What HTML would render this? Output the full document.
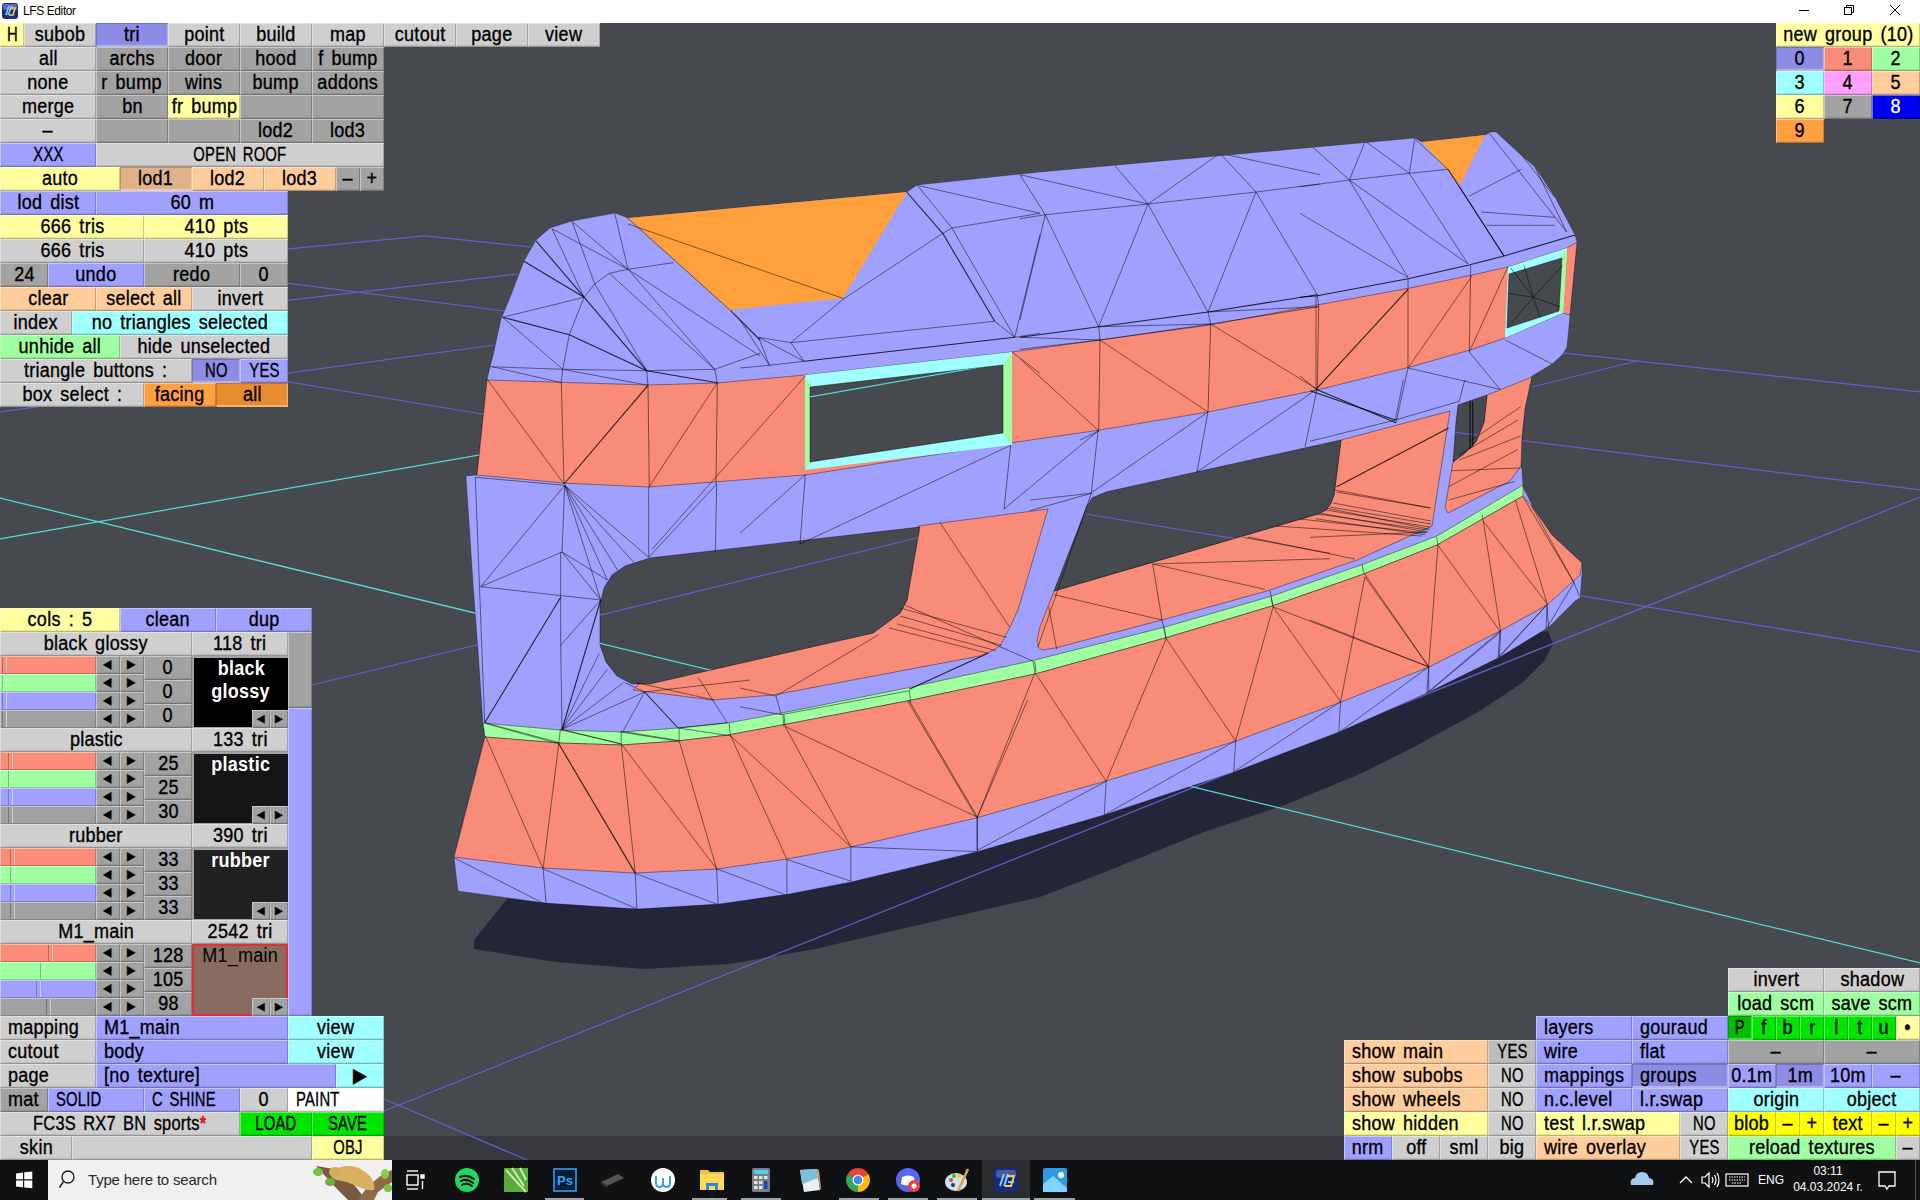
<!DOCTYPE html>
<html><head><meta charset="utf-8"><style>
*{margin:0;padding:0;box-sizing:border-box}
html,body{width:1920px;height:1200px;overflow:hidden;background:#46494e;font-family:"Liberation Sans",sans-serif}
.b{position:absolute;font-size:20px;line-height:24px;white-space:nowrap;overflow:hidden;
 box-shadow:inset 1px 1px 0 rgba(255,255,255,.4),inset -1px -1px 0 rgba(0,0,0,.2),inset 0 -2px 1px rgba(0,0,0,.1)}
.b span{display:inline-block;transform:scaleX(.9);transform-origin:50% 50%;word-spacing:3px;letter-spacing:.3px;position:relative;top:-1px;-webkit-text-stroke:0.35px currentColor}
.b.p{box-shadow:inset 1px 1px 0 rgba(0,0,0,.18),inset -1px -2px 1px rgba(255,255,255,.35)}
.b.u span{transform:scaleX(.74)}
.b.l span{transform-origin:0 50%}
.sl{position:absolute;box-shadow:inset 1px 1px 0 rgba(255,255,255,.4),inset -1px -1px 0 rgba(0,0,0,.2)}
.sl i{position:absolute;top:1px;width:5px;height:16px;border-left:1px solid rgba(0,0,0,.25);border-right:1px solid rgba(255,255,255,.5)}
.pv{position:absolute;font-size:20px;line-height:24px;text-align:center}
.pv span{display:inline-block;transform:scaleX(.9);word-spacing:3px;letter-spacing:.3px;position:relative;top:-1px}
#title{position:absolute;left:0;top:0;width:1920px;height:23px;background:#fff}
#status{position:absolute;left:0;top:1136px;width:1920px;height:24px;background:#36383d}
#tb{position:absolute;left:0;top:1160px;width:1920px;height:40px;background:#101113}
</style></head><body>
<div id="title"><svg style="position:absolute;left:0;top:0" width="1920" height="23"><rect x="2" y="3" width="16" height="16" rx="3" fill="#1a2f80"/><rect x="3" y="4" width="14" height="6" rx="2" fill="#5a70c0"/><path d="M6,15 L9,6 M8,15 L12,6" stroke="#7fd0ff" stroke-width="1.6"/><path d="M10,8 L15,8 L13,15 L9,15" stroke="#f0d040" stroke-width="1.6" fill="none"/><line x1="1799" y1="10.5" x2="1809" y2="10.5" stroke="#000" stroke-width="1"/><rect x="1844.5" y="7.5" width="7" height="7" fill="none" stroke="#000" stroke-width="1"/><path d="M1846.5,7.5 V5.5 H1853.5 V12.5 H1851.5" fill="none" stroke="#000" stroke-width="1"/><path d="M1890,5 L1900,15 M1900,5 L1890,15" stroke="#000" stroke-width="1"/></svg><div style="position:absolute;left:23px;top:3px;font-size:12px;line-height:16px;color:#000;letter-spacing:-0.4px">LFS Editor</div></div>
<div id="status"></div>
<svg width="1920" height="1137" viewBox="0 0 1920 1137" style="position:absolute;left:0;top:23px">
<g transform="translate(0,-23)">
<polygon points="507,899 474,940 474,949 556,962 644,969 729,964 815,949 927,923 1040,897 1100,874 1204,832 1282,806 1360,774 1412,748 1478,712 1522,683 1545,660 1553,644 1548,631 1400,650 800,850" fill="#232638" />
<polyline points="0,276 425,236 531,247" fill="none" stroke="#6660d0" stroke-width="1.25"/>
<polyline points="0,246 504,311" fill="none" stroke="#6660d0" stroke-width="1.25"/>
<polyline points="0,333 518,274" fill="none" stroke="#6660d0" stroke-width="1.25"/>
<polyline points="0,412 495,345" fill="none" stroke="#6660d0" stroke-width="1.25"/>
<polyline points="0,334 482,414 560,427" fill="none" stroke="#6660d0" stroke-width="1.25"/>
<polyline points="312,685 917,538 1100,493" fill="none" stroke="#6660d0" stroke-width="1.25"/>
<polyline points="1086,514 1920,652" fill="none" stroke="#6660d0" stroke-width="1.25"/>
<polyline points="1300,413 1920,490" fill="none" stroke="#6660d0" stroke-width="1.25"/>
<polyline points="1532,387 1637,361" fill="none" stroke="#6660d0" stroke-width="1.25"/>
<polyline points="1500,346 1920,392" fill="none" stroke="#6660d0" stroke-width="1.25"/>
<polyline points="384,1111 1920,497" fill="none" stroke="#6660d0" stroke-width="1.25"/>
<polyline points="384,1099 527,1160" fill="none" stroke="#6660d0" stroke-width="1.25"/>
<polyline points="0,539 1100,346" fill="none" stroke="#58d8d8" stroke-width="1.25"/>
<polyline points="0,498 1920,963" fill="none" stroke="#58d8d8" stroke-width="1.25"/>
<polygon points="458,891 454,857 485,736 483,723 478,650 473,583 466,476 477,475 487,380 490,367 493,356 501,319 511,295 524,261 536,240 550,228 572,221 615,213 628,218 907,192 917,185 1040,172 1415,138 1422,142 1485,135 1491,132 1496,132 1521,155 1535,167 1555,197 1575,235 1577,242 1570,315 1567,347 1562,355 1552,364 1532,376 1530,385 1525,409 1522,437 1521,466 1522,470 1523,487 1534,509 1552,535 1582,563 1582,574 1580,598 1575,601 1549,627 1500,657 1427,693 1339,732 1234,772 1104,815 976,852 851,882 789,894 719,904 637,909 545,903" fill="#a0a0ff" stroke="#000" stroke-opacity="0.3" stroke-width="0.8"/>
<polygon points="487,380 648,385 717,383 805,375 1012,352 1100,340 1210,325 1317,305 1410,288 1472,275 1508,267 1567,248 1577,242 1570,315 1563,313 1505,338 1470,350 1410,367 1317,390 1208,412 1100,430 1010,443 805,475 648,487 563,483 477,475" fill="#f88c78" stroke="#000" stroke-opacity="0.45" stroke-width="0.9"/>
<polygon points="805,375 1012,352 1012,445 805,470" fill="#a0ffff" />
<polygon points="1508,267 1567,248 1563,313 1505,338" fill="#a0ffff" />
<polygon points="805,375 810,387 810,462 805,470" fill="#a0ffa0" />
<polygon points="1003,365 1012,352 1012,445 1003,433" fill="#a0ffa0" />
<polygon points="1559,260 1567,248 1563,313 1557,310" fill="#a0ffa0" />
<polygon points="628,218 907,192 843,298 730,310" fill="#ffa03c" />
<polygon points="1422,142 1485,135 1460,185" fill="#ffa03c" />
<polygon points="918,526 1048,509 1018,610 1010,627 1000,646 990,652 980,656 773,695 713,700 633,690 640,683 873,633 900,613 907,600" fill="#f88c78" stroke="#000" stroke-opacity="0.45" stroke-width="0.9"/>
<polygon points="1341,440 1450,411 1432,526 1357,560 1267,591 1162,620 1055,648 1042,650 1038,647 1037,640 1040,627 1054,591 1318,514 1326,510 1331,503 1334,495" fill="#f88c78" stroke="#000" stroke-opacity="0.45" stroke-width="0.9"/>
<polygon points="1487,395 1532,377 1530,385 1525,409 1522,437 1521,466 1510,481 1448,513 1445,508 1453,462 1465,453 1476,442 1484,422" fill="#f88c78" stroke="#000" stroke-opacity="0.45" stroke-width="0.9"/>
<polygon points="483,723 560,730 622,732 678,728 728,723 782,713 907,688 1035,660 1165,627 1272,596 1361,565 1437,536 1523,485 1523,496 1437,545 1361,575 1272,606 1165,638 1035,674 907,701 782,725 728,735 678,741 622,745 560,743 485,737" fill="#a0ffa0" stroke="#000" stroke-opacity="0.45" stroke-width="0.9"/>
<polygon points="485,737 560,743 622,745 678,741 728,735 782,725 907,701 1035,674 1165,638 1272,606 1361,575 1437,545 1523,496 1534,509 1552,535 1582,563 1580,575 1547,605 1500,631 1429,667 1341,702 1236,741 1106,781 976,818 851,847 787,859 717,869 635,873 543,868 454,857" fill="#f88c78" stroke="#000" stroke-opacity="0.45" stroke-width="0.9"/>
<defs><clipPath id="hc"><polygon points="650,558 920,527 907,600 900,613 873,633 650,684 632,684 617,676 606,662 600,645 600,605 604,588 612,575 625,566" fill="#000" /><polygon points="1106,492 1341,440 1334,495 1331,503 1326,510 1318,514 1054,591 1087,506 1092,498" fill="#000" /><polygon points="1458,405 1487,395 1484,422 1476,442 1465,453 1453,462 1456,422" fill="#000" /><polygon points="810,387 1003,365 1003,433 810,462" fill="#000" /><polygon points="1509,274 1562,258 1559,311 1507,328" fill="#000" /></clipPath></defs>
<polygon points="650,558 920,527 907,600 900,613 873,633 650,684 632,684 617,676 606,662 600,645 600,605 604,588 612,575 625,566" fill="#46494e" stroke="#000" stroke-opacity="0.45" stroke-width="0.9"/>
<polygon points="1106,492 1341,440 1334,495 1331,503 1326,510 1318,514 1054,591 1087,506 1092,498" fill="#46494e" stroke="#000" stroke-opacity="0.45" stroke-width="0.9"/>
<polygon points="1458,405 1487,395 1484,422 1476,442 1465,453 1453,462 1456,422" fill="#46494e" stroke="#000" stroke-opacity="0.45" stroke-width="0.9"/>
<polygon points="810,387 1003,365 1003,433 810,462" fill="#46494e" stroke="#000" stroke-opacity="0.45" stroke-width="0.9"/>
<polygon points="1509,274 1562,258 1559,311 1507,328" fill="#46494e" stroke="#000" stroke-opacity="0.45" stroke-width="0.9"/>
<g clip-path="url(#hc)">
<polyline points="0,276 425,236 531,247" fill="none" stroke="#6660d0" stroke-width="1.25"/>
<polyline points="0,246 504,311" fill="none" stroke="#6660d0" stroke-width="1.25"/>
<polyline points="0,333 518,274" fill="none" stroke="#6660d0" stroke-width="1.25"/>
<polyline points="0,412 495,345" fill="none" stroke="#6660d0" stroke-width="1.25"/>
<polyline points="0,334 482,414 560,427" fill="none" stroke="#6660d0" stroke-width="1.25"/>
<polyline points="312,685 917,538 1100,493" fill="none" stroke="#6660d0" stroke-width="1.25"/>
<polyline points="1086,514 1920,652" fill="none" stroke="#6660d0" stroke-width="1.25"/>
<polyline points="1300,413 1920,490" fill="none" stroke="#6660d0" stroke-width="1.25"/>
<polyline points="1532,387 1637,361" fill="none" stroke="#6660d0" stroke-width="1.25"/>
<polyline points="1500,346 1920,392" fill="none" stroke="#6660d0" stroke-width="1.25"/>
<polyline points="384,1111 1920,497" fill="none" stroke="#6660d0" stroke-width="1.25"/>
<polyline points="384,1099 527,1160" fill="none" stroke="#6660d0" stroke-width="1.25"/>
<polyline points="0,539 1100,346" fill="none" stroke="#58d8d8" stroke-width="1.25"/>
<polyline points="0,498 1920,963" fill="none" stroke="#58d8d8" stroke-width="1.25"/>
</g>
<defs><clipPath id="sc"><polygon points="458,891 454,857 485,736 483,723 478,650 473,583 466,476 477,475 487,380 490,367 493,356 501,319 511,295 524,261 536,240 550,228 572,221 615,213 628,218 907,192 917,185 1040,172 1415,138 1422,142 1485,135 1491,132 1496,132 1521,155 1535,167 1555,197 1575,235 1577,242 1570,315 1567,347 1562,355 1552,364 1532,376 1530,385 1525,409 1522,437 1521,466 1522,470 1523,487 1534,509 1552,535 1582,563 1582,574 1580,598 1575,601 1549,627 1500,657 1427,693 1339,732 1234,772 1104,815 976,852 851,882 789,894 719,904 637,909 545,903" fill="#000" /></clipPath></defs>
<g clip-path="url(#sc)"><polyline points="536.0,240.8 646.7,370.7" stroke="#000" stroke-opacity="0.8" stroke-width="1.1" fill="none"/><polyline points="524.0,261.3 584.0,297.3" stroke="#000" stroke-opacity="0.8" stroke-width="1.1" fill="none"/><polyline points="552.0,228.8 584.0,297.3" stroke="#000" stroke-opacity="0.55" stroke-width="0.9" fill="none"/><polyline points="584.0,297.3 502.7,317.3" stroke="#000" stroke-opacity="0.55" stroke-width="0.9" fill="none"/><polyline points="502.7,317.3 569.3,334.7" stroke="#000" stroke-opacity="0.8" stroke-width="1.1" fill="none"/><polyline points="569.3,334.7 646.7,370.7" stroke="#000" stroke-opacity="0.8" stroke-width="1.1" fill="none"/><polyline points="502.7,317.3 562.7,369.3" stroke="#000" stroke-opacity="0.55" stroke-width="0.9" fill="none"/><polyline points="584.0,297.3 569.3,334.7" stroke="#000" stroke-opacity="0.55" stroke-width="0.9" fill="none"/><polyline points="569.3,334.7 562.7,369.3" stroke="#000" stroke-opacity="0.55" stroke-width="0.9" fill="none"/><polyline points="489.3,366.7 562.7,369.3" stroke="#000" stroke-opacity="0.55" stroke-width="0.9" fill="none"/><polyline points="562.7,369.3 646.7,370.7" stroke="#000" stroke-opacity="0.55" stroke-width="0.9" fill="none"/><polyline points="646.7,370.7 714.7,369.3" stroke="#000" stroke-opacity="0.55" stroke-width="0.9" fill="none"/><polyline points="492.0,366.7 561.3,382.7" stroke="#000" stroke-opacity="0.55" stroke-width="0.9" fill="none"/><polyline points="562.7,369.3 648.0,385.3" stroke="#000" stroke-opacity="0.55" stroke-width="0.9" fill="none"/><polyline points="646.7,370.7 717.3,382.7" stroke="#000" stroke-opacity="0.8" stroke-width="1.1" fill="none"/><polyline points="714.7,369.3 760.0,353.3" stroke="#000" stroke-opacity="0.55" stroke-width="0.9" fill="none"/><polyline points="572.0,221.3 594.7,284.0" stroke="#000" stroke-opacity="0.55" stroke-width="0.9" fill="none"/><polyline points="552.0,228.8 628.0,269.3" stroke="#000" stroke-opacity="0.55" stroke-width="0.9" fill="none"/><polyline points="572.0,221.3 628.0,269.3" stroke="#000" stroke-opacity="0.55" stroke-width="0.9" fill="none"/><polyline points="614.7,213.3 628.0,269.3" stroke="#000" stroke-opacity="0.55" stroke-width="0.9" fill="none"/><polyline points="594.7,284.0 609.3,273.3" stroke="#000" stroke-opacity="0.55" stroke-width="0.9" fill="none"/><polyline points="609.3,273.3 628.0,269.3" stroke="#000" stroke-opacity="0.55" stroke-width="0.9" fill="none"/><polyline points="628.0,269.3 673.3,262.7" stroke="#000" stroke-opacity="0.55" stroke-width="0.9" fill="none"/><polyline points="594.7,284.0 584.0,297.3" stroke="#000" stroke-opacity="0.55" stroke-width="0.9" fill="none"/><polyline points="594.7,284.0 646.7,370.7" stroke="#000" stroke-opacity="0.55" stroke-width="0.9" fill="none"/><polyline points="609.3,273.3 714.7,369.3" stroke="#000" stroke-opacity="0.55" stroke-width="0.9" fill="none"/><polyline points="628.0,269.3 714.7,369.3" stroke="#000" stroke-opacity="0.55" stroke-width="0.9" fill="none"/><polyline points="628.0,269.3 760.0,356.0" stroke="#000" stroke-opacity="0.55" stroke-width="0.9" fill="none"/><polyline points="730.7,310.7 760.0,340.0" stroke="#000" stroke-opacity="0.8" stroke-width="1.1" fill="none"/><polyline points="486.7,378.7 564.0,484.0" stroke="#000" stroke-opacity="0.55" stroke-width="0.9" fill="none"/><polyline points="648.0,385.3 564.0,484.0" stroke="#000" stroke-opacity="0.8" stroke-width="1.1" fill="none"/><polyline points="561.3,382.7 564.0,484.0" stroke="#000" stroke-opacity="0.55" stroke-width="0.9" fill="none"/><polyline points="648.0,385.3 649.3,486.7" stroke="#000" stroke-opacity="0.55" stroke-width="0.9" fill="none"/><polyline points="717.3,382.7 716.0,484.0" stroke="#000" stroke-opacity="0.55" stroke-width="0.9" fill="none"/><polyline points="717.3,382.7 649.3,486.7" stroke="#000" stroke-opacity="0.55" stroke-width="0.9" fill="none"/><polyline points="626.7,217.3 730.7,310.7" stroke="#000" stroke-opacity="0.55" stroke-width="0.9" fill="none"/><polyline points="714.7,369.3 717.3,382.7" stroke="#000" stroke-opacity="0.55" stroke-width="0.9" fill="none"/><polyline points="646.7,370.7 648.0,385.3" stroke="#000" stroke-opacity="0.55" stroke-width="0.9" fill="none"/><polyline points="562.7,369.3 561.3,382.7" stroke="#000" stroke-opacity="0.55" stroke-width="0.9" fill="none"/><polyline points="628.0,224.0 844.0,298.7" stroke="#000" stroke-opacity="0.55" stroke-width="0.9" fill="none"/><polyline points="906.7,192.0 942.7,233.3" stroke="#000" stroke-opacity="0.8" stroke-width="1.1" fill="none"/><polyline points="942.7,233.3 994.7,321.3" stroke="#000" stroke-opacity="0.8" stroke-width="1.1" fill="none"/><polyline points="917.3,185.3 952.0,228.0" stroke="#000" stroke-opacity="0.55" stroke-width="0.9" fill="none"/><polyline points="952.0,228.0 1014.7,337.3" stroke="#000" stroke-opacity="0.55" stroke-width="0.9" fill="none"/><polyline points="942.7,233.3 952.0,228.0" stroke="#000" stroke-opacity="0.55" stroke-width="0.9" fill="none"/><polyline points="952.0,228.0 1040.0,213.3" stroke="#000" stroke-opacity="0.55" stroke-width="0.9" fill="none"/><polyline points="917.3,185.3 1040.0,213.3" stroke="#000" stroke-opacity="0.55" stroke-width="0.9" fill="none"/><polyline points="1014.7,337.3 1040.0,234.7" stroke="#000" stroke-opacity="0.55" stroke-width="0.9" fill="none"/><polyline points="942.7,233.3 844.0,298.7" stroke="#000" stroke-opacity="0.55" stroke-width="0.9" fill="none"/><polyline points="844.0,298.7 790.7,342.7" stroke="#000" stroke-opacity="0.55" stroke-width="0.9" fill="none"/><polyline points="790.7,342.7 758.7,337.3" stroke="#000" stroke-opacity="0.55" stroke-width="0.9" fill="none"/><polyline points="758.7,337.3 769.3,365.3" stroke="#000" stroke-opacity="0.55" stroke-width="0.9" fill="none"/><polyline points="790.7,342.7 804.0,361.3" stroke="#000" stroke-opacity="0.55" stroke-width="0.9" fill="none"/><polyline points="758.7,337.3 804.0,361.3" stroke="#000" stroke-opacity="0.55" stroke-width="0.9" fill="none"/><polyline points="790.7,342.7 994.7,321.3" stroke="#000" stroke-opacity="0.55" stroke-width="0.9" fill="none"/><polyline points="804.0,361.3 1014.7,337.3" stroke="#000" stroke-opacity="0.8" stroke-width="1.1" fill="none"/><polyline points="769.3,365.3 804.0,361.3" stroke="#000" stroke-opacity="0.55" stroke-width="0.9" fill="none"/><polyline points="740.0,320.0 769.3,365.3" stroke="#000" stroke-opacity="0.55" stroke-width="0.9" fill="none"/><polyline points="740.0,368.0 769.3,365.3" stroke="#000" stroke-opacity="0.55" stroke-width="0.9" fill="none"/><polyline points="1014.7,337.3 1040.0,333.3" stroke="#000" stroke-opacity="0.55" stroke-width="0.9" fill="none"/><polyline points="805.3,376.0 652.0,549.3" stroke="#000" stroke-opacity="0.55" stroke-width="0.9" fill="none"/><polyline points="1012.0,352.0 1040.0,373.3" stroke="#000" stroke-opacity="0.55" stroke-width="0.9" fill="none"/><polyline points="994.7,321.3 1014.7,337.3" stroke="#000" stroke-opacity="0.55" stroke-width="0.9" fill="none"/><polyline points="1020.0,174.7 1045.3,214.7" stroke="#000" stroke-opacity="0.55" stroke-width="0.9" fill="none"/><polyline points="1020.0,174.7 1148.0,204.0" stroke="#000" stroke-opacity="0.55" stroke-width="0.9" fill="none"/><polyline points="1113.3,164.0 1148.0,204.0" stroke="#000" stroke-opacity="0.55" stroke-width="0.9" fill="none"/><polyline points="1148.0,204.0 1220.0,153.3" stroke="#000" stroke-opacity="0.55" stroke-width="0.9" fill="none"/><polyline points="1220.0,153.3 1256.0,192.0" stroke="#000" stroke-opacity="0.55" stroke-width="0.9" fill="none"/><polyline points="1220.0,153.3 1320.0,174.7" stroke="#000" stroke-opacity="0.55" stroke-width="0.9" fill="none"/><polyline points="1020.0,218.7 1045.3,214.7" stroke="#000" stroke-opacity="0.55" stroke-width="0.9" fill="none"/><polyline points="1045.3,214.7 1148.0,204.0" stroke="#000" stroke-opacity="0.55" stroke-width="0.9" fill="none"/><polyline points="1148.0,204.0 1256.0,192.0" stroke="#000" stroke-opacity="0.55" stroke-width="0.9" fill="none"/><polyline points="1256.0,192.0 1320.0,184.0" stroke="#000" stroke-opacity="0.55" stroke-width="0.9" fill="none"/><polyline points="1045.3,214.7 1098.7,326.7" stroke="#000" stroke-opacity="0.55" stroke-width="0.9" fill="none"/><polyline points="1148.0,204.0 1098.7,326.7" stroke="#000" stroke-opacity="0.55" stroke-width="0.9" fill="none"/><polyline points="1148.0,204.0 1208.0,312.0" stroke="#000" stroke-opacity="0.55" stroke-width="0.9" fill="none"/><polyline points="1256.0,192.0 1208.0,312.0" stroke="#000" stroke-opacity="0.55" stroke-width="0.9" fill="none"/><polyline points="1256.0,192.0 1317.3,294.7" stroke="#000" stroke-opacity="0.55" stroke-width="0.9" fill="none"/><polyline points="1045.3,214.7 1020.0,320.0" stroke="#000" stroke-opacity="0.55" stroke-width="0.9" fill="none"/><polyline points="1020.0,337.3 1098.7,326.7" stroke="#000" stroke-opacity="0.8" stroke-width="1.1" fill="none"/><polyline points="1098.7,326.7 1208.0,312.0" stroke="#000" stroke-opacity="0.8" stroke-width="1.1" fill="none"/><polyline points="1208.0,312.0 1317.3,294.7" stroke="#000" stroke-opacity="0.8" stroke-width="1.1" fill="none"/><polyline points="1020.0,349.3 1100.0,340.0" stroke="#000" stroke-opacity="0.55" stroke-width="0.9" fill="none"/><polyline points="1100.0,340.0 1210.7,324.0" stroke="#000" stroke-opacity="0.55" stroke-width="0.9" fill="none"/><polyline points="1210.7,324.0 1318.7,306.7" stroke="#000" stroke-opacity="0.55" stroke-width="0.9" fill="none"/><polyline points="1098.7,326.7 1100.0,340.0" stroke="#000" stroke-opacity="0.55" stroke-width="0.9" fill="none"/><polyline points="1208.0,312.0 1210.7,324.0" stroke="#000" stroke-opacity="0.55" stroke-width="0.9" fill="none"/><polyline points="1317.3,294.7 1318.7,306.7" stroke="#000" stroke-opacity="0.55" stroke-width="0.9" fill="none"/><polyline points="1020.0,337.3 1100.0,340.0" stroke="#000" stroke-opacity="0.55" stroke-width="0.9" fill="none"/><polyline points="1098.7,326.7 1210.7,324.0" stroke="#000" stroke-opacity="0.55" stroke-width="0.9" fill="none"/><polyline points="1208.0,312.0 1318.7,306.7" stroke="#000" stroke-opacity="0.55" stroke-width="0.9" fill="none"/><polyline points="1100.0,340.0 1098.7,430.7" stroke="#000" stroke-opacity="0.55" stroke-width="0.9" fill="none"/><polyline points="1100.0,340.0 1208.0,412.0" stroke="#000" stroke-opacity="0.55" stroke-width="0.9" fill="none"/><polyline points="1210.7,324.0 1208.0,412.0" stroke="#000" stroke-opacity="0.55" stroke-width="0.9" fill="none"/><polyline points="1210.7,324.0 1317.3,389.3" stroke="#000" stroke-opacity="0.55" stroke-width="0.9" fill="none"/><polyline points="1020.0,358.7 1098.7,430.7" stroke="#000" stroke-opacity="0.55" stroke-width="0.9" fill="none"/><polyline points="1318.7,306.7 1317.3,389.3" stroke="#000" stroke-opacity="0.55" stroke-width="0.9" fill="none"/><polyline points="1310.7,145.3 1349.3,180.0" stroke="#000" stroke-opacity="0.55" stroke-width="0.9" fill="none"/><polyline points="1365.3,141.3 1349.3,180.0" stroke="#000" stroke-opacity="0.55" stroke-width="0.9" fill="none"/><polyline points="1365.3,141.3 1409.3,173.3" stroke="#000" stroke-opacity="0.55" stroke-width="0.9" fill="none"/><polyline points="1414.7,138.7 1409.3,173.3" stroke="#000" stroke-opacity="0.55" stroke-width="0.9" fill="none"/><polyline points="1414.7,138.7 1448.0,169.3" stroke="#000" stroke-opacity="0.55" stroke-width="0.9" fill="none"/><polyline points="1300.0,186.7 1349.3,180.0" stroke="#000" stroke-opacity="0.55" stroke-width="0.9" fill="none"/><polyline points="1349.3,180.0 1409.3,173.3" stroke="#000" stroke-opacity="0.55" stroke-width="0.9" fill="none"/><polyline points="1409.3,173.3 1448.0,169.3" stroke="#000" stroke-opacity="0.55" stroke-width="0.9" fill="none"/><polyline points="1300.0,213.3 1408.0,277.3" stroke="#000" stroke-opacity="0.55" stroke-width="0.9" fill="none"/><polyline points="1349.3,180.0 1408.0,277.3" stroke="#000" stroke-opacity="0.55" stroke-width="0.9" fill="none"/><polyline points="1409.3,173.3 1468.0,264.0" stroke="#000" stroke-opacity="0.55" stroke-width="0.9" fill="none"/><polyline points="1349.3,180.0 1468.0,264.0" stroke="#000" stroke-opacity="0.55" stroke-width="0.9" fill="none"/><polyline points="1448.0,169.3 1504.0,256.0" stroke="#000" stroke-opacity="0.8" stroke-width="1.1" fill="none"/><polyline points="1458.7,185.3 1504.0,256.0" stroke="#000" stroke-opacity="0.55" stroke-width="0.9" fill="none"/><polyline points="1469.3,196.0 1521.3,169.3" stroke="#000" stroke-opacity="0.55" stroke-width="0.9" fill="none"/><polyline points="1481.3,212.0 1554.7,217.3" stroke="#000" stroke-opacity="0.55" stroke-width="0.9" fill="none"/><polyline points="1486.7,225.3 1554.7,225.3" stroke="#000" stroke-opacity="0.55" stroke-width="0.9" fill="none"/><polyline points="1300.0,297.3 1316.0,296.0" stroke="#000" stroke-opacity="0.8" stroke-width="1.1" fill="none"/><polyline points="1316.0,296.0 1408.0,278.7" stroke="#000" stroke-opacity="0.8" stroke-width="1.1" fill="none"/><polyline points="1408.0,278.7 1468.0,265.3" stroke="#000" stroke-opacity="0.8" stroke-width="1.1" fill="none"/><polyline points="1468.0,265.3 1504.0,256.0" stroke="#000" stroke-opacity="0.8" stroke-width="1.1" fill="none"/><polyline points="1504.0,256.0 1576.0,234.7" stroke="#000" stroke-opacity="0.8" stroke-width="1.1" fill="none"/><polyline points="1316.0,296.0 1316.0,389.3" stroke="#000" stroke-opacity="0.55" stroke-width="0.9" fill="none"/><polyline points="1408.0,278.7 1408.0,368.0" stroke="#000" stroke-opacity="0.55" stroke-width="0.9" fill="none"/><polyline points="1470.7,265.3 1469.3,352.0" stroke="#000" stroke-opacity="0.55" stroke-width="0.9" fill="none"/><polyline points="1316.0,389.3 1408.0,289.3" stroke="#000" stroke-opacity="0.8" stroke-width="1.1" fill="none"/><polyline points="1408.0,368.0 1472.0,276.0" stroke="#000" stroke-opacity="0.55" stroke-width="0.9" fill="none"/><polyline points="1469.3,352.0 1508.0,266.7" stroke="#000" stroke-opacity="0.55" stroke-width="0.9" fill="none"/><polyline points="1300.0,376.0 1316.0,389.3" stroke="#000" stroke-opacity="0.55" stroke-width="0.9" fill="none"/><polyline points="1316.0,389.3 1396.0,422.7" stroke="#000" stroke-opacity="0.8" stroke-width="1.1" fill="none"/><polyline points="1408.0,368.0 1396.0,422.7" stroke="#000" stroke-opacity="0.55" stroke-width="0.9" fill="none"/><polyline points="1408.0,368.0 1500.0,389.3" stroke="#000" stroke-opacity="0.55" stroke-width="0.9" fill="none"/><polyline points="1469.3,352.0 1500.0,389.3" stroke="#000" stroke-opacity="0.55" stroke-width="0.9" fill="none"/><polyline points="1505.3,340.0 1552.0,364.0" stroke="#000" stroke-opacity="0.55" stroke-width="0.9" fill="none"/><polyline points="1521.3,154.7 1554.7,197.3" stroke="#000" stroke-opacity="0.55" stroke-width="0.9" fill="none"/><polyline points="1489.3,133.3 1566.7,232.0" stroke="#000" stroke-opacity="0.55" stroke-width="0.9" fill="none"/><polyline points="1534.7,166.7 1566.7,232.0" stroke="#000" stroke-opacity="0.55" stroke-width="0.9" fill="none"/><polyline points="1533.3,297.3 1510.7,268.0" stroke="#000" stroke-opacity="0.55" stroke-width="0.9" fill="none"/><polyline points="1533.3,297.3 1562.7,265.3" stroke="#000" stroke-opacity="0.55" stroke-width="0.9" fill="none"/><polyline points="1533.3,297.3 1508.0,293.3" stroke="#000" stroke-opacity="0.55" stroke-width="0.9" fill="none"/><polyline points="1533.3,297.3 1560.0,306.7" stroke="#000" stroke-opacity="0.55" stroke-width="0.9" fill="none"/><polyline points="1533.3,297.3 1510.7,324.0" stroke="#000" stroke-opacity="0.55" stroke-width="0.9" fill="none"/><polyline points="1533.3,297.3 1540.0,317.3" stroke="#000" stroke-opacity="0.55" stroke-width="0.9" fill="none"/><polyline points="1533.3,297.3 1524.0,265.3" stroke="#000" stroke-opacity="0.55" stroke-width="0.9" fill="none"/><polyline points="564.7,485.3 480.7,586.7" stroke="#000" stroke-opacity="0.55" stroke-width="0.9" fill="none"/><polyline points="564.7,485.3 562.0,552.0" stroke="#000" stroke-opacity="0.55" stroke-width="0.9" fill="none"/><polyline points="564.7,485.3 600.7,600.0" stroke="#000" stroke-opacity="0.55" stroke-width="0.9" fill="none"/><polyline points="564.7,485.3 607.3,580.0" stroke="#000" stroke-opacity="0.55" stroke-width="0.9" fill="none"/><polyline points="564.7,485.3 618.0,570.7" stroke="#000" stroke-opacity="0.55" stroke-width="0.9" fill="none"/><polyline points="564.7,485.3 634.0,562.7" stroke="#000" stroke-opacity="0.55" stroke-width="0.9" fill="none"/><polyline points="564.7,485.3 648.7,557.3" stroke="#000" stroke-opacity="0.55" stroke-width="0.9" fill="none"/><polyline points="648.7,486.7 648.7,557.3" stroke="#000" stroke-opacity="0.55" stroke-width="0.9" fill="none"/><polyline points="716.7,484.0 648.7,557.3" stroke="#000" stroke-opacity="0.55" stroke-width="0.9" fill="none"/><polyline points="716.7,484.0 715.3,552.0" stroke="#000" stroke-opacity="0.55" stroke-width="0.9" fill="none"/><polyline points="562.0,552.0 480.7,586.7" stroke="#000" stroke-opacity="0.55" stroke-width="0.9" fill="none"/><polyline points="562.0,552.0 600.7,600.0" stroke="#000" stroke-opacity="0.55" stroke-width="0.9" fill="none"/><polyline points="562.0,552.0 607.3,580.0" stroke="#000" stroke-opacity="0.55" stroke-width="0.9" fill="none"/><polyline points="560.7,552.0 560.7,597.3" stroke="#000" stroke-opacity="0.55" stroke-width="0.9" fill="none"/><polyline points="480.7,586.7 600.7,600.0" stroke="#000" stroke-opacity="0.55" stroke-width="0.9" fill="none"/><polyline points="560.7,597.3 560.7,645.3" stroke="#000" stroke-opacity="0.55" stroke-width="0.9" fill="none"/><polyline points="484.7,722.7 560.7,597.3" stroke="#000" stroke-opacity="0.8" stroke-width="1.1" fill="none"/><polyline points="560.7,645.3 600.7,600.0" stroke="#000" stroke-opacity="0.55" stroke-width="0.9" fill="none"/><polyline points="560.7,645.3 562.0,729.3" stroke="#000" stroke-opacity="0.55" stroke-width="0.9" fill="none"/><polyline points="562.0,729.3 600.7,600.0" stroke="#000" stroke-opacity="0.8" stroke-width="1.1" fill="none"/><polyline points="562.0,729.3 607.3,669.3" stroke="#000" stroke-opacity="0.55" stroke-width="0.9" fill="none"/><polyline points="562.0,729.3 623.3,682.7" stroke="#000" stroke-opacity="0.55" stroke-width="0.9" fill="none"/><polyline points="562.0,729.3 644.7,692.0" stroke="#000" stroke-opacity="0.55" stroke-width="0.9" fill="none"/><polyline points="562.0,729.3 599.3,653.3" stroke="#000" stroke-opacity="0.55" stroke-width="0.9" fill="none"/><polyline points="644.7,692.0 678.0,728.0" stroke="#000" stroke-opacity="0.8" stroke-width="1.1" fill="none"/><polyline points="644.7,692.0 623.3,730.7" stroke="#000" stroke-opacity="0.55" stroke-width="0.9" fill="none"/><polyline points="624.7,682.7 644.7,692.0" stroke="#000" stroke-opacity="0.55" stroke-width="0.9" fill="none"/><polyline points="678.0,728.0 727.3,722.7" stroke="#000" stroke-opacity="0.55" stroke-width="0.9" fill="none"/><polyline points="484.7,722.7 559.3,742.7" stroke="#000" stroke-opacity="0.55" stroke-width="0.9" fill="none"/><polyline points="562.0,729.3 620.7,744.0" stroke="#000" stroke-opacity="0.55" stroke-width="0.9" fill="none"/><polyline points="620.7,732.0 679.3,741.3" stroke="#000" stroke-opacity="0.55" stroke-width="0.9" fill="none"/><polyline points="644.7,692.0 750.0,680.0" stroke="#000" stroke-opacity="0.55" stroke-width="0.9" fill="none"/><polyline points="636.7,682.7 714.0,700.0" stroke="#000" stroke-opacity="0.55" stroke-width="0.9" fill="none"/><polyline points="698.0,677.3 727.3,722.7" stroke="#000" stroke-opacity="0.55" stroke-width="0.9" fill="none"/><polyline points="475.3,477.3 484.7,722.7" stroke="#000" stroke-opacity="0.55" stroke-width="0.9" fill="none"/><polyline points="564.7,485.3 475.3,477.3" stroke="#000" stroke-opacity="0.55" stroke-width="0.9" fill="none"/><polyline points="776.0,696.0 781.3,714.7" stroke="#000" stroke-opacity="0.55" stroke-width="0.9" fill="none"/><polyline points="909.3,690.7 910.7,702.7" stroke="#000" stroke-opacity="0.55" stroke-width="0.9" fill="none"/><polyline points="740.0,706.7 781.3,714.7" stroke="#000" stroke-opacity="0.55" stroke-width="0.9" fill="none"/><polyline points="781.3,714.7 909.3,690.7" stroke="#000" stroke-opacity="0.55" stroke-width="0.9" fill="none"/><polyline points="909.3,689.3 988.0,653.3" stroke="#000" stroke-opacity="0.8" stroke-width="1.1" fill="none"/><polyline points="776.0,696.0 878.7,634.7" stroke="#000" stroke-opacity="0.55" stroke-width="0.9" fill="none"/><polyline points="740.0,688.0 776.0,696.0" stroke="#000" stroke-opacity="0.55" stroke-width="0.9" fill="none"/><polyline points="940.0,522.7 1009.3,626.7" stroke="#000" stroke-opacity="0.55" stroke-width="0.9" fill="none"/><polyline points="900.0,608.0 1006.7,637.3" stroke="#000" stroke-opacity="0.55" stroke-width="0.9" fill="none"/><polyline points="900.0,616.0 1001.3,645.3" stroke="#000" stroke-opacity="0.55" stroke-width="0.9" fill="none"/><polyline points="897.3,624.0 996.0,650.7" stroke="#000" stroke-opacity="0.55" stroke-width="0.9" fill="none"/><polyline points="889.3,628.0 988.0,653.3" stroke="#000" stroke-opacity="0.55" stroke-width="0.9" fill="none"/><polyline points="905.3,605.3 1033.3,661.3" stroke="#000" stroke-opacity="0.55" stroke-width="0.9" fill="none"/><polyline points="782.7,714.7 784.0,726.7" stroke="#000" stroke-opacity="0.55" stroke-width="0.9" fill="none"/><polyline points="1034.7,661.3 1036.0,672.0" stroke="#000" stroke-opacity="0.55" stroke-width="0.9" fill="none"/><polyline points="805.3,474.7 800.0,544.0" stroke="#000" stroke-opacity="0.55" stroke-width="0.9" fill="none"/><polyline points="805.3,474.7 740.0,533.3" stroke="#000" stroke-opacity="0.55" stroke-width="0.9" fill="none"/><polyline points="1010.7,445.3 1004.0,509.3" stroke="#000" stroke-opacity="0.55" stroke-width="0.9" fill="none"/><polyline points="1010.7,445.3 800.0,544.0" stroke="#000" stroke-opacity="0.55" stroke-width="0.9" fill="none"/><polyline points="1098.0,430.7 1091.3,493.3" stroke="#000" stroke-opacity="0.55" stroke-width="0.9" fill="none"/><polyline points="1054.0,594.7 1162.0,620.0" stroke="#000" stroke-opacity="0.55" stroke-width="0.9" fill="none"/><polyline points="1152.7,564.0 1162.0,620.0" stroke="#000" stroke-opacity="0.55" stroke-width="0.9" fill="none"/><polyline points="1152.7,564.0 1264.7,589.3" stroke="#000" stroke-opacity="0.55" stroke-width="0.9" fill="none"/><polyline points="1152.7,564.0 1330.0,558.7" stroke="#000" stroke-opacity="0.55" stroke-width="0.9" fill="none"/><polyline points="1243.3,537.3 1330.0,553.3" stroke="#000" stroke-opacity="0.55" stroke-width="0.9" fill="none"/><polyline points="1048.7,606.7 1056.7,649.3" stroke="#000" stroke-opacity="0.55" stroke-width="0.9" fill="none"/><polyline points="1162.0,620.0 1166.0,638.7" stroke="#000" stroke-opacity="0.55" stroke-width="0.9" fill="none"/><polyline points="1270.0,590.7 1272.7,605.3" stroke="#000" stroke-opacity="0.55" stroke-width="0.9" fill="none"/><polyline points="1030.0,500.0 1091.3,493.3" stroke="#000" stroke-opacity="0.55" stroke-width="0.9" fill="none"/><polyline points="1030.0,510.7 1091.3,493.3" stroke="#000" stroke-opacity="0.55" stroke-width="0.9" fill="none"/><polyline points="1038.0,646.7 1091.3,493.3" stroke="#000" stroke-opacity="0.55" stroke-width="0.9" fill="none"/><polyline points="1363.3,572.0 1428.7,666.7" stroke="#000" stroke-opacity="0.55" stroke-width="0.9" fill="none"/><polyline points="1438.0,545.3 1428.7,666.7" stroke="#000" stroke-opacity="0.55" stroke-width="0.9" fill="none"/><polyline points="1438.0,545.3 1500.7,632.0" stroke="#000" stroke-opacity="0.55" stroke-width="0.9" fill="none"/><polyline points="1483.3,521.3 1500.7,632.0" stroke="#000" stroke-opacity="0.55" stroke-width="0.9" fill="none"/><polyline points="1483.3,521.3 1547.3,604.0" stroke="#000" stroke-opacity="0.55" stroke-width="0.9" fill="none"/><polyline points="1515.3,500.0 1547.3,604.0" stroke="#000" stroke-opacity="0.55" stroke-width="0.9" fill="none"/><polyline points="1523.3,497.3 1574.0,582.7" stroke="#000" stroke-opacity="0.55" stroke-width="0.9" fill="none"/><polyline points="1531.3,505.3 1574.0,582.7" stroke="#000" stroke-opacity="0.55" stroke-width="0.9" fill="none"/><polyline points="1310.0,620.0 1428.7,666.7" stroke="#000" stroke-opacity="0.55" stroke-width="0.9" fill="none"/><polyline points="1428.7,666.7 1428.7,692.0" stroke="#000" stroke-opacity="0.55" stroke-width="0.9" fill="none"/><polyline points="1500.7,632.0 1499.3,657.3" stroke="#000" stroke-opacity="0.55" stroke-width="0.9" fill="none"/><polyline points="1547.3,604.0 1546.0,629.3" stroke="#000" stroke-opacity="0.55" stroke-width="0.9" fill="none"/><polyline points="1574.0,582.7 1579.3,596.0" stroke="#000" stroke-opacity="0.55" stroke-width="0.9" fill="none"/><polyline points="1428.7,692.0 1500.7,632.0" stroke="#000" stroke-opacity="0.55" stroke-width="0.9" fill="none"/><polyline points="1499.3,657.3 1547.3,604.0" stroke="#000" stroke-opacity="0.55" stroke-width="0.9" fill="none"/><polyline points="1546.0,629.3 1574.0,582.7" stroke="#000" stroke-opacity="0.55" stroke-width="0.9" fill="none"/><polyline points="1363.3,572.0 1362.0,564.0" stroke="#000" stroke-opacity="0.55" stroke-width="0.9" fill="none"/><polyline points="1438.0,545.3 1436.7,537.3" stroke="#000" stroke-opacity="0.55" stroke-width="0.9" fill="none"/><polyline points="1483.3,521.3 1482.0,514.7" stroke="#000" stroke-opacity="0.55" stroke-width="0.9" fill="none"/><polyline points="1336.7,486.7 1448.7,428.0" stroke="#000" stroke-opacity="0.8" stroke-width="1.1" fill="none"/><polyline points="1336.7,492.0 1430.0,508.0" stroke="#000" stroke-opacity="0.55" stroke-width="0.9" fill="none"/><polyline points="1326.0,508.0 1430.0,529.3" stroke="#000" stroke-opacity="0.55" stroke-width="0.9" fill="none"/><polyline points="1320.7,513.3 1427.3,532.0" stroke="#000" stroke-opacity="0.55" stroke-width="0.9" fill="none"/><polyline points="1315.3,518.7 1424.7,534.7" stroke="#000" stroke-opacity="0.55" stroke-width="0.9" fill="none"/><polyline points="1310.0,537.3 1427.3,532.0" stroke="#000" stroke-opacity="0.55" stroke-width="0.9" fill="none"/><polyline points="1448.7,486.7 1518.0,449.3" stroke="#000" stroke-opacity="0.55" stroke-width="0.9" fill="none"/><polyline points="1451.3,470.7 1520.7,468.0" stroke="#000" stroke-opacity="0.55" stroke-width="0.9" fill="none"/><polyline points="1459.3,460.0 1520.7,436.0" stroke="#000" stroke-opacity="0.55" stroke-width="0.9" fill="none"/><polyline points="1459.3,454.7 1518.0,420.0" stroke="#000" stroke-opacity="0.55" stroke-width="0.9" fill="none"/><polyline points="1470.0,441.3 1520.7,406.7" stroke="#000" stroke-opacity="0.55" stroke-width="0.9" fill="none"/><polyline points="1448.7,500.0 1515.3,481.3" stroke="#000" stroke-opacity="0.55" stroke-width="0.9" fill="none"/><polyline points="1310.0,390.7 1395.3,420.0" stroke="#000" stroke-opacity="0.8" stroke-width="1.1" fill="none"/><polyline points="1395.3,420.0 1459.3,401.3" stroke="#000" stroke-opacity="0.55" stroke-width="0.9" fill="none"/><polyline points="1395.3,420.0 1403.3,380.0" stroke="#000" stroke-opacity="0.55" stroke-width="0.9" fill="none"/><polyline points="1310.0,441.3 1395.3,420.0" stroke="#000" stroke-opacity="0.55" stroke-width="0.9" fill="none"/><polyline points="1459.3,401.3 1464.7,380.0" stroke="#000" stroke-opacity="0.55" stroke-width="0.9" fill="none"/><polyline points="1470.0,401.3 1470.0,449.3" stroke="#000" stroke-opacity="0.8" stroke-width="1.1" fill="none"/><polyline points="1472.7,401.3 1472.7,446.7" stroke="#000" stroke-opacity="0.8" stroke-width="1.1" fill="none"/><polyline points="485.3,735.9 543.1,868.8" stroke="#000" stroke-opacity="0.55" stroke-width="0.9" fill="none"/><polyline points="558.8,743.8 543.1,868.8" stroke="#000" stroke-opacity="0.55" stroke-width="0.9" fill="none"/><polyline points="558.8,743.8 635.3,873.4" stroke="#000" stroke-opacity="0.8" stroke-width="1.1" fill="none"/><polyline points="621.2,743.8 635.3,873.4" stroke="#000" stroke-opacity="0.55" stroke-width="0.9" fill="none"/><polyline points="621.2,743.8 716.6,868.8" stroke="#000" stroke-opacity="0.55" stroke-width="0.9" fill="none"/><polyline points="679.1,740.6 716.6,868.8" stroke="#000" stroke-opacity="0.55" stroke-width="0.9" fill="none"/><polyline points="730.6,735.9 786.9,859.4" stroke="#000" stroke-opacity="0.55" stroke-width="0.9" fill="none"/><polyline points="730.6,735.9 850.9,846.9" stroke="#000" stroke-opacity="0.55" stroke-width="0.9" fill="none"/><polyline points="785.3,726.6 850.9,846.9" stroke="#000" stroke-opacity="0.55" stroke-width="0.9" fill="none"/><polyline points="785.3,726.6 977.5,817.2" stroke="#000" stroke-opacity="0.55" stroke-width="0.9" fill="none"/><polyline points="908.8,700.0 977.5,817.2" stroke="#000" stroke-opacity="0.55" stroke-width="0.9" fill="none"/><polyline points="1027.5,700.0 977.5,817.2" stroke="#000" stroke-opacity="0.55" stroke-width="0.9" fill="none"/><polyline points="454.1,857.8 546.2,904.7" stroke="#000" stroke-opacity="0.55" stroke-width="0.9" fill="none"/><polyline points="543.1,868.8 546.2,904.7" stroke="#000" stroke-opacity="0.55" stroke-width="0.9" fill="none"/><polyline points="543.1,868.8 636.9,908.8" stroke="#000" stroke-opacity="0.55" stroke-width="0.9" fill="none"/><polyline points="635.3,873.4 636.9,908.8" stroke="#000" stroke-opacity="0.55" stroke-width="0.9" fill="none"/><polyline points="635.3,873.4 718.1,904.7" stroke="#000" stroke-opacity="0.55" stroke-width="0.9" fill="none"/><polyline points="716.6,868.8 718.1,904.7" stroke="#000" stroke-opacity="0.55" stroke-width="0.9" fill="none"/><polyline points="716.6,868.8 786.9,895.3" stroke="#000" stroke-opacity="0.55" stroke-width="0.9" fill="none"/><polyline points="786.9,859.4 786.9,895.3" stroke="#000" stroke-opacity="0.55" stroke-width="0.9" fill="none"/><polyline points="786.9,859.4 850.9,881.2" stroke="#000" stroke-opacity="0.55" stroke-width="0.9" fill="none"/><polyline points="850.9,846.9 850.9,881.2" stroke="#000" stroke-opacity="0.55" stroke-width="0.9" fill="none"/><polyline points="850.9,846.9 977.5,851.6" stroke="#000" stroke-opacity="0.55" stroke-width="0.9" fill="none"/><polyline points="977.5,817.2 977.5,851.6" stroke="#000" stroke-opacity="0.55" stroke-width="0.9" fill="none"/><polyline points="485.3,723.4 558.8,743.8" stroke="#000" stroke-opacity="0.55" stroke-width="0.9" fill="none"/><polyline points="560.3,729.7 621.2,743.8" stroke="#000" stroke-opacity="0.55" stroke-width="0.9" fill="none"/><polyline points="621.2,731.2 679.1,740.6" stroke="#000" stroke-opacity="0.55" stroke-width="0.9" fill="none"/><polyline points="679.1,728.1 730.6,735.9" stroke="#000" stroke-opacity="0.55" stroke-width="0.9" fill="none"/><polyline points="560.3,729.7 558.8,743.8" stroke="#000" stroke-opacity="0.55" stroke-width="0.9" fill="none"/><polyline points="621.2,731.2 621.2,743.8" stroke="#000" stroke-opacity="0.55" stroke-width="0.9" fill="none"/><polyline points="679.1,728.1 679.1,740.6" stroke="#000" stroke-opacity="0.55" stroke-width="0.9" fill="none"/><polyline points="729.1,723.4 730.6,735.9" stroke="#000" stroke-opacity="0.55" stroke-width="0.9" fill="none"/><polyline points="783.8,714.1 785.3,726.6" stroke="#000" stroke-opacity="0.55" stroke-width="0.9" fill="none"/><polyline points="907.5,700.6 976.9,818.0" stroke="#000" stroke-opacity="0.55" stroke-width="0.9" fill="none"/><polyline points="1035.0,672.5 976.9,818.0" stroke="#000" stroke-opacity="0.55" stroke-width="0.9" fill="none"/><polyline points="1035.0,672.5 1106.2,781.2" stroke="#000" stroke-opacity="0.55" stroke-width="0.9" fill="none"/><polyline points="1166.2,638.7 1106.2,781.2" stroke="#000" stroke-opacity="0.55" stroke-width="0.9" fill="none"/><polyline points="1166.2,638.7 1235.6,740.7" stroke="#000" stroke-opacity="0.55" stroke-width="0.9" fill="none"/><polyline points="1273.1,606.9 1235.6,740.7" stroke="#000" stroke-opacity="0.55" stroke-width="0.9" fill="none"/><polyline points="1273.1,606.9 1340.6,701.7" stroke="#000" stroke-opacity="0.55" stroke-width="0.9" fill="none"/><polyline points="1273.1,606.9 1428.7,666.9" stroke="#000" stroke-opacity="0.55" stroke-width="0.9" fill="none"/><polyline points="1364.9,576.9 1340.6,701.7" stroke="#000" stroke-opacity="0.55" stroke-width="0.9" fill="none"/><polyline points="1364.9,576.9 1428.7,666.9" stroke="#000" stroke-opacity="0.55" stroke-width="0.9" fill="none"/><polyline points="976.9,818.0 976.9,850.6" stroke="#000" stroke-opacity="0.55" stroke-width="0.9" fill="none"/><polyline points="1106.2,781.2 1104.3,815.0" stroke="#000" stroke-opacity="0.55" stroke-width="0.9" fill="none"/><polyline points="1235.6,740.7 1233.7,771.8" stroke="#000" stroke-opacity="0.55" stroke-width="0.9" fill="none"/><polyline points="1340.6,701.7 1338.7,732.5" stroke="#000" stroke-opacity="0.55" stroke-width="0.9" fill="none"/><polyline points="1428.7,666.9 1426.8,693.1" stroke="#000" stroke-opacity="0.55" stroke-width="0.9" fill="none"/><polyline points="976.9,850.6 1106.2,781.2" stroke="#000" stroke-opacity="0.55" stroke-width="0.9" fill="none"/><polyline points="1104.3,815.0 1235.6,740.7" stroke="#000" stroke-opacity="0.55" stroke-width="0.9" fill="none"/><polyline points="1233.7,771.8 1340.6,701.7" stroke="#000" stroke-opacity="0.55" stroke-width="0.9" fill="none"/><polyline points="1338.7,732.5 1428.7,666.9" stroke="#000" stroke-opacity="0.55" stroke-width="0.9" fill="none"/><polyline points="1426.8,693.1 1499.9,631.2" stroke="#000" stroke-opacity="0.55" stroke-width="0.9" fill="none"/><polyline points="1499.9,631.2 1498.1,657.5" stroke="#000" stroke-opacity="0.55" stroke-width="0.9" fill="none"/><polyline points="1546.8,605.0 1548.7,627.5" stroke="#000" stroke-opacity="0.55" stroke-width="0.9" fill="none"/><polyline points="1498.1,657.5 1546.8,605.0" stroke="#000" stroke-opacity="0.55" stroke-width="0.9" fill="none"/><polyline points="1035.0,672.5 1033.1,661.2" stroke="#000" stroke-opacity="0.55" stroke-width="0.9" fill="none"/><polyline points="1166.2,638.7 1164.3,627.5" stroke="#000" stroke-opacity="0.55" stroke-width="0.9" fill="none"/><polyline points="1273.1,606.9 1271.2,597.5" stroke="#000" stroke-opacity="0.55" stroke-width="0.9" fill="none"/><polyline points="1004,509 1098,431" stroke="#000" stroke-opacity="0.55" stroke-width="0.9" fill="none"/><polyline points="1208,412 1197,472" stroke="#000" stroke-opacity="0.55" stroke-width="0.9" fill="none"/><polyline points="1208,412 1091,493" stroke="#000" stroke-opacity="0.55" stroke-width="0.9" fill="none"/><polyline points="1317,389 1305,447" stroke="#000" stroke-opacity="0.55" stroke-width="0.9" fill="none"/><polyline points="1317,389 1197,472" stroke="#000" stroke-opacity="0.55" stroke-width="0.9" fill="none"/><polyline points="1099,431 1080,440" stroke="#000" stroke-opacity="0.55" stroke-width="0.9" fill="none"/><polyline points="1333,503 1431,521" stroke="#000" stroke-opacity="0.55" stroke-width="0.9" fill="none"/><polyline points="1330,507 1431,524" stroke="#000" stroke-opacity="0.55" stroke-width="0.9" fill="none"/><polyline points="1326,510 1430,527" stroke="#000" stroke-opacity="0.55" stroke-width="0.9" fill="none"/><polyline points="1318,514 1428,530" stroke="#000" stroke-opacity="0.55" stroke-width="0.9" fill="none"/><polyline points="1300,519 1426,533" stroke="#000" stroke-opacity="0.55" stroke-width="0.9" fill="none"/><polyline points="1276,526 1422,536" stroke="#000" stroke-opacity="0.55" stroke-width="0.9" fill="none"/><polyline points="1335,490 1431,508" stroke="#000" stroke-opacity="0.55" stroke-width="0.9" fill="none"/><polyline points="1248,537 1355,559" stroke="#000" stroke-opacity="0.55" stroke-width="0.9" fill="none"/></g>
</g></svg>
<div class="b u" style="left:0px;top:23px;width:24px;height:24px;background:#ffffa0;color:#000;text-align:center;"><span style="">H</span></div>
<div class="b" style="left:24px;top:23px;width:72px;height:24px;background:#cfcfcf;color:#000;text-align:center;"><span style="">subob</span></div>
<div class="b p" style="left:96px;top:23px;width:72px;height:24px;background:#8c8ce4;color:#000;text-align:center;"><span style="">tri</span></div>
<div class="b" style="left:168px;top:23px;width:72px;height:24px;background:#cfcfcf;color:#000;text-align:center;"><span style="">point</span></div>
<div class="b" style="left:240px;top:23px;width:72px;height:24px;background:#cfcfcf;color:#000;text-align:center;"><span style="">build</span></div>
<div class="b" style="left:312px;top:23px;width:72px;height:24px;background:#cfcfcf;color:#000;text-align:center;"><span style="">map</span></div>
<div class="b" style="left:384px;top:23px;width:72px;height:24px;background:#cfcfcf;color:#000;text-align:center;"><span style="">cutout</span></div>
<div class="b" style="left:456px;top:23px;width:72px;height:24px;background:#cfcfcf;color:#000;text-align:center;"><span style="">page</span></div>
<div class="b" style="left:528px;top:23px;width:72px;height:24px;background:#cfcfcf;color:#000;text-align:center;"><span style="">view</span></div>
<div class="b" style="left:0px;top:47px;width:96px;height:24px;background:#cfcfcf;color:#000;text-align:center;"><span style="">all</span></div>
<div class="b" style="left:96px;top:47px;width:72px;height:24px;background:#a2a2a2;color:#000;text-align:center;"><span style="">archs</span></div>
<div class="b" style="left:168px;top:47px;width:72px;height:24px;background:#a2a2a2;color:#000;text-align:center;"><span style="">door</span></div>
<div class="b" style="left:240px;top:47px;width:72px;height:24px;background:#a2a2a2;color:#000;text-align:center;"><span style="">hood</span></div>
<div class="b" style="left:312px;top:47px;width:72px;height:24px;background:#a2a2a2;color:#000;text-align:center;"><span style="">f bump</span></div>
<div class="b" style="left:0px;top:71px;width:96px;height:24px;background:#cfcfcf;color:#000;text-align:center;"><span style="">none</span></div>
<div class="b" style="left:96px;top:71px;width:72px;height:24px;background:#a2a2a2;color:#000;text-align:center;"><span style="">r bump</span></div>
<div class="b" style="left:168px;top:71px;width:72px;height:24px;background:#a2a2a2;color:#000;text-align:center;"><span style="">wins</span></div>
<div class="b" style="left:240px;top:71px;width:72px;height:24px;background:#a2a2a2;color:#000;text-align:center;"><span style="">bump</span></div>
<div class="b" style="left:312px;top:71px;width:72px;height:24px;background:#a2a2a2;color:#000;text-align:center;"><span style="">addons</span></div>
<div class="b" style="left:0px;top:95px;width:96px;height:24px;background:#cfcfcf;color:#000;text-align:center;"><span style="">merge</span></div>
<div class="b" style="left:96px;top:95px;width:72px;height:24px;background:#a2a2a2;color:#000;text-align:center;"><span style="">bn</span></div>
<div class="b" style="left:168px;top:95px;width:72px;height:24px;background:#ffffa0;color:#000;text-align:center;"><span style="">fr bump</span></div>
<div class="b" style="left:240px;top:95px;width:72px;height:24px;background:#a2a2a2;color:#000;text-align:center;"><span style=""></span></div>
<div class="b" style="left:312px;top:95px;width:72px;height:24px;background:#a2a2a2;color:#000;text-align:center;"><span style=""></span></div>
<div class="b" style="left:0px;top:119px;width:96px;height:24px;background:#cfcfcf;color:#000;text-align:center;"><span style="">–</span></div>
<div class="b" style="left:96px;top:119px;width:72px;height:24px;background:#a2a2a2;color:#000;text-align:center;"><span style=""></span></div>
<div class="b" style="left:168px;top:119px;width:72px;height:24px;background:#a2a2a2;color:#000;text-align:center;"><span style=""></span></div>
<div class="b" style="left:240px;top:119px;width:72px;height:24px;background:#a2a2a2;color:#000;text-align:center;"><span style="">lod2</span></div>
<div class="b" style="left:312px;top:119px;width:72px;height:24px;background:#a2a2a2;color:#000;text-align:center;"><span style="">lod3</span></div>
<div class="b u" style="left:0px;top:143px;width:96px;height:24px;background:#a0a0ff;color:#000;text-align:center;"><span style="">XXX</span></div>
<div class="b u" style="left:96px;top:143px;width:288px;height:24px;background:#cfcfcf;color:#000;text-align:center;"><span style="">OPEN ROOF</span></div>
<div class="b" style="left:0px;top:167px;width:120px;height:24px;background:#ffffa0;color:#000;text-align:center;"><span style="">auto</span></div>
<div class="b p" style="left:120px;top:167px;width:72px;height:24px;background:#e0b28a;color:#000;text-align:center;"><span style="">lod1</span></div>
<div class="b" style="left:192px;top:167px;width:72px;height:24px;background:#ffcc9c;color:#000;text-align:center;"><span style="">lod2</span></div>
<div class="b" style="left:264px;top:167px;width:72px;height:24px;background:#ffcc9c;color:#000;text-align:center;"><span style="">lod3</span></div>
<div class="b" style="left:336px;top:167px;width:24px;height:24px;background:#a2a2a2;color:#000;text-align:center;"><span style="">–</span></div>
<div class="b" style="left:360px;top:167px;width:24px;height:24px;background:#a2a2a2;color:#000;text-align:center;"><span style="">+</span></div>
<div class="b" style="left:0px;top:191px;width:96px;height:24px;background:#a0a0ff;color:#000;text-align:center;"><span style="">lod dist</span></div>
<div class="b" style="left:96px;top:191px;width:192px;height:24px;background:#a0a0ff;color:#000;text-align:center;"><span style="">60 m</span></div>
<div class="b" style="left:0px;top:215px;width:144px;height:24px;background:#ffffa0;color:#000;text-align:center;"><span style="">666 tris</span></div>
<div class="b" style="left:144px;top:215px;width:144px;height:24px;background:#ffffa0;color:#000;text-align:center;"><span style="">410 pts</span></div>
<div class="b" style="left:0px;top:239px;width:144px;height:24px;background:#cfcfcf;color:#000;text-align:center;"><span style="">666 tris</span></div>
<div class="b" style="left:144px;top:239px;width:144px;height:24px;background:#cfcfcf;color:#000;text-align:center;"><span style="">410 pts</span></div>
<div class="b" style="left:0px;top:263px;width:48px;height:24px;background:#a2a2a2;color:#000;text-align:center;"><span style="">24</span></div>
<div class="b" style="left:48px;top:263px;width:96px;height:24px;background:#a0a0ff;color:#000;text-align:center;"><span style="">undo</span></div>
<div class="b" style="left:144px;top:263px;width:96px;height:24px;background:#a2a2a2;color:#000;text-align:center;"><span style="">redo</span></div>
<div class="b" style="left:240px;top:263px;width:48px;height:24px;background:#a2a2a2;color:#000;text-align:center;"><span style="">0</span></div>
<div class="b" style="left:0px;top:287px;width:96px;height:24px;background:#ffcc9c;color:#000;text-align:center;"><span style="">clear</span></div>
<div class="b" style="left:96px;top:287px;width:96px;height:24px;background:#ffcc9c;color:#000;text-align:center;"><span style="">select all</span></div>
<div class="b" style="left:192px;top:287px;width:96px;height:24px;background:#cfcfcf;color:#000;text-align:center;"><span style="">invert</span></div>
<div class="b" style="left:0px;top:311px;width:72px;height:24px;background:#cfcfcf;color:#000;text-align:center;"><span style="">index</span></div>
<div class="b" style="left:72px;top:311px;width:216px;height:24px;background:#a0ffff;color:#000;text-align:center;"><span style="">no triangles selected</span></div>
<div class="b" style="left:0px;top:335px;width:120px;height:24px;background:#a0ffa0;color:#000;text-align:center;"><span style="">unhide all</span></div>
<div class="b" style="left:120px;top:335px;width:168px;height:24px;background:#cfcfcf;color:#000;text-align:center;"><span style="">hide unselected</span></div>
<div class="b" style="left:0px;top:359px;width:192px;height:24px;background:#cfcfcf;color:#000;text-align:center;"><span style="">triangle buttons :</span></div>
<div class="b p u" style="left:192px;top:359px;width:48px;height:24px;background:#8c8ce4;color:#000;text-align:center;"><span style="">NO</span></div>
<div class="b u" style="left:240px;top:359px;width:48px;height:24px;background:#a0a0ff;color:#000;text-align:center;"><span style="">YES</span></div>
<div class="b" style="left:0px;top:383px;width:144px;height:24px;background:#cfcfcf;color:#000;text-align:center;"><span style="">box select :</span></div>
<div class="b" style="left:144px;top:383px;width:72px;height:24px;background:#ffa040;color:#000;text-align:center;"><span style="">facing</span></div>
<div class="b p" style="left:216px;top:383px;width:72px;height:24px;background:#e88c30;color:#000;text-align:center;"><span style="">all</span></div>
<div class="b" style="left:1776px;top:23px;width:144px;height:24px;background:#ffffa0;color:#000;text-align:center;"><span style="">new group (10)</span></div>
<div class="b p" style="left:1776px;top:47px;width:48px;height:24px;background:#8c8ce4;color:#000;text-align:center;"><span style="">0</span></div>
<div class="b" style="left:1824px;top:47px;width:48px;height:24px;background:#f88c78;color:#000;text-align:center;"><span style="">1</span></div>
<div class="b" style="left:1872px;top:47px;width:48px;height:24px;background:#a0ffa0;color:#000;text-align:center;"><span style="">2</span></div>
<div class="b" style="left:1776px;top:71px;width:48px;height:24px;background:#a0ffff;color:#000;text-align:center;"><span style="">3</span></div>
<div class="b" style="left:1824px;top:71px;width:48px;height:24px;background:#ffa0ff;color:#000;text-align:center;"><span style="">4</span></div>
<div class="b" style="left:1872px;top:71px;width:48px;height:24px;background:#ffcc9c;color:#000;text-align:center;"><span style="">5</span></div>
<div class="b" style="left:1776px;top:95px;width:48px;height:24px;background:#ffffa0;color:#000;text-align:center;"><span style="">6</span></div>
<div class="b" style="left:1824px;top:95px;width:48px;height:24px;background:#a2a2a2;color:#000;text-align:center;"><span style="">7</span></div>
<div class="b" style="left:1872px;top:95px;width:48px;height:24px;background:#0000ee;color:#fff;text-align:center;"><span style="">8</span></div>
<div class="b" style="left:1776px;top:119px;width:48px;height:24px;background:#ffa040;color:#000;text-align:center;"><span style="">9</span></div>
<div class="b" style="left:0px;top:608px;width:120px;height:24px;background:#ffffa0;color:#000;text-align:center;"><span style="">cols : 5</span></div>
<div class="b" style="left:120px;top:608px;width:96px;height:24px;background:#a0a0ff;color:#000;text-align:center;"><span style="">clean</span></div>
<div class="b" style="left:216px;top:608px;width:96px;height:24px;background:#a0a0ff;color:#000;text-align:center;"><span style="">dup</span></div>
<div class="b" style="left:0px;top:632px;width:192px;height:24px;background:#cfcfcf;color:#000;text-align:center;"><span style="">black glossy</span></div>
<div class="b" style="left:192px;top:632px;width:96px;height:24px;background:#cfcfcf;color:#000;text-align:center;"><span style="">118 tri</span></div>
<div class="sl" style="left:0;top:656px;width:96px;height:18px;background:#f88c78"><i style="left:2px"></i></div>
<div class="b" style="left:96px;top:656px;width:24px;height:18px;background:#a2a2a2;color:#000;text-align:center;font-size:12px;line-height:18px;"><span style="">◀</span></div>
<div class="b" style="left:120px;top:656px;width:24px;height:18px;background:#a2a2a2;color:#000;text-align:center;font-size:12px;line-height:18px;"><span style="">▶</span></div>
<div class="sl" style="left:0;top:674px;width:96px;height:18px;background:#a0ffa0"><i style="left:2px"></i></div>
<div class="b" style="left:96px;top:674px;width:24px;height:18px;background:#a2a2a2;color:#000;text-align:center;font-size:12px;line-height:18px;"><span style="">◀</span></div>
<div class="b" style="left:120px;top:674px;width:24px;height:18px;background:#a2a2a2;color:#000;text-align:center;font-size:12px;line-height:18px;"><span style="">▶</span></div>
<div class="sl" style="left:0;top:692px;width:96px;height:18px;background:#a0a0ff"><i style="left:2px"></i></div>
<div class="b" style="left:96px;top:692px;width:24px;height:18px;background:#a2a2a2;color:#000;text-align:center;font-size:12px;line-height:18px;"><span style="">◀</span></div>
<div class="b" style="left:120px;top:692px;width:24px;height:18px;background:#a2a2a2;color:#000;text-align:center;font-size:12px;line-height:18px;"><span style="">▶</span></div>
<div class="sl" style="left:0;top:710px;width:96px;height:18px;background:#a0a0a0"><i style="left:2px"></i></div>
<div class="b" style="left:96px;top:710px;width:24px;height:18px;background:#a2a2a2;color:#000;text-align:center;font-size:12px;line-height:18px;"><span style="">◀</span></div>
<div class="b" style="left:120px;top:710px;width:24px;height:18px;background:#a2a2a2;color:#000;text-align:center;font-size:12px;line-height:18px;"><span style="">▶</span></div>
<div class="b" style="left:144px;top:656px;width:48px;height:24px;background:#a2a2a2;color:#000;text-align:center;"><span style="">0</span></div>
<div class="b" style="left:144px;top:680px;width:48px;height:24px;background:#a2a2a2;color:#000;text-align:center;"><span style="">0</span></div>
<div class="b" style="left:144px;top:704px;width:48px;height:24px;background:#a2a2a2;color:#000;text-align:center;"><span style="">0</span></div>
<div class="pv" style="left:192px;top:656px;width:96px;height:72px;background:#000000;color:#fff;font-weight:bold;box-shadow:none;border-left:2px solid #a2a2a2;border-top:2px solid #a2a2a2;border-bottom:1px solid #a2a2a2;padding-top:0;line-height:23px;"><span>black</span><br><span>glossy</span></div>
<div class="b" style="left:252px;top:710px;width:18px;height:18px;background:#a2a2a2;color:#000;text-align:center;font-size:11px;line-height:18px;"><span style="">◀</span></div>
<div class="b" style="left:270px;top:710px;width:18px;height:18px;background:#a2a2a2;color:#000;text-align:center;font-size:11px;line-height:18px;"><span style="">▶</span></div>
<div class="b" style="left:0px;top:728px;width:192px;height:24px;background:#cfcfcf;color:#000;text-align:center;"><span style="">plastic</span></div>
<div class="b" style="left:192px;top:728px;width:96px;height:24px;background:#cfcfcf;color:#000;text-align:center;"><span style="">133 tri</span></div>
<div class="sl" style="left:0;top:752px;width:96px;height:18px;background:#f88c78"><i style="left:8px"></i></div>
<div class="b" style="left:96px;top:752px;width:24px;height:18px;background:#a2a2a2;color:#000;text-align:center;font-size:12px;line-height:18px;"><span style="">◀</span></div>
<div class="b" style="left:120px;top:752px;width:24px;height:18px;background:#a2a2a2;color:#000;text-align:center;font-size:12px;line-height:18px;"><span style="">▶</span></div>
<div class="sl" style="left:0;top:770px;width:96px;height:18px;background:#a0ffa0"><i style="left:8px"></i></div>
<div class="b" style="left:96px;top:770px;width:24px;height:18px;background:#a2a2a2;color:#000;text-align:center;font-size:12px;line-height:18px;"><span style="">◀</span></div>
<div class="b" style="left:120px;top:770px;width:24px;height:18px;background:#a2a2a2;color:#000;text-align:center;font-size:12px;line-height:18px;"><span style="">▶</span></div>
<div class="sl" style="left:0;top:788px;width:96px;height:18px;background:#a0a0ff"><i style="left:8px"></i></div>
<div class="b" style="left:96px;top:788px;width:24px;height:18px;background:#a2a2a2;color:#000;text-align:center;font-size:12px;line-height:18px;"><span style="">◀</span></div>
<div class="b" style="left:120px;top:788px;width:24px;height:18px;background:#a2a2a2;color:#000;text-align:center;font-size:12px;line-height:18px;"><span style="">▶</span></div>
<div class="sl" style="left:0;top:806px;width:96px;height:18px;background:#a0a0a0"><i style="left:8px"></i></div>
<div class="b" style="left:96px;top:806px;width:24px;height:18px;background:#a2a2a2;color:#000;text-align:center;font-size:12px;line-height:18px;"><span style="">◀</span></div>
<div class="b" style="left:120px;top:806px;width:24px;height:18px;background:#a2a2a2;color:#000;text-align:center;font-size:12px;line-height:18px;"><span style="">▶</span></div>
<div class="b" style="left:144px;top:752px;width:48px;height:24px;background:#a2a2a2;color:#000;text-align:center;"><span style="">25</span></div>
<div class="b" style="left:144px;top:776px;width:48px;height:24px;background:#a2a2a2;color:#000;text-align:center;"><span style="">25</span></div>
<div class="b" style="left:144px;top:800px;width:48px;height:24px;background:#a2a2a2;color:#000;text-align:center;"><span style="">30</span></div>
<div class="pv" style="left:192px;top:752px;width:96px;height:72px;background:#151515;color:#fff;font-weight:bold;box-shadow:none;border-left:2px solid #a2a2a2;border-top:2px solid #a2a2a2;border-bottom:1px solid #a2a2a2;padding-top:0;line-height:23px;"><span>plastic</span></div>
<div class="b" style="left:252px;top:806px;width:18px;height:18px;background:#a2a2a2;color:#000;text-align:center;font-size:11px;line-height:18px;"><span style="">◀</span></div>
<div class="b" style="left:270px;top:806px;width:18px;height:18px;background:#a2a2a2;color:#000;text-align:center;font-size:11px;line-height:18px;"><span style="">▶</span></div>
<div class="b" style="left:0px;top:824px;width:192px;height:24px;background:#cfcfcf;color:#000;text-align:center;"><span style="">rubber</span></div>
<div class="b" style="left:192px;top:824px;width:96px;height:24px;background:#cfcfcf;color:#000;text-align:center;"><span style="">390 tri</span></div>
<div class="sl" style="left:0;top:848px;width:96px;height:18px;background:#f88c78"><i style="left:10px"></i></div>
<div class="b" style="left:96px;top:848px;width:24px;height:18px;background:#a2a2a2;color:#000;text-align:center;font-size:12px;line-height:18px;"><span style="">◀</span></div>
<div class="b" style="left:120px;top:848px;width:24px;height:18px;background:#a2a2a2;color:#000;text-align:center;font-size:12px;line-height:18px;"><span style="">▶</span></div>
<div class="sl" style="left:0;top:866px;width:96px;height:18px;background:#a0ffa0"><i style="left:10px"></i></div>
<div class="b" style="left:96px;top:866px;width:24px;height:18px;background:#a2a2a2;color:#000;text-align:center;font-size:12px;line-height:18px;"><span style="">◀</span></div>
<div class="b" style="left:120px;top:866px;width:24px;height:18px;background:#a2a2a2;color:#000;text-align:center;font-size:12px;line-height:18px;"><span style="">▶</span></div>
<div class="sl" style="left:0;top:884px;width:96px;height:18px;background:#a0a0ff"><i style="left:10px"></i></div>
<div class="b" style="left:96px;top:884px;width:24px;height:18px;background:#a2a2a2;color:#000;text-align:center;font-size:12px;line-height:18px;"><span style="">◀</span></div>
<div class="b" style="left:120px;top:884px;width:24px;height:18px;background:#a2a2a2;color:#000;text-align:center;font-size:12px;line-height:18px;"><span style="">▶</span></div>
<div class="sl" style="left:0;top:902px;width:96px;height:18px;background:#a0a0a0"><i style="left:10px"></i></div>
<div class="b" style="left:96px;top:902px;width:24px;height:18px;background:#a2a2a2;color:#000;text-align:center;font-size:12px;line-height:18px;"><span style="">◀</span></div>
<div class="b" style="left:120px;top:902px;width:24px;height:18px;background:#a2a2a2;color:#000;text-align:center;font-size:12px;line-height:18px;"><span style="">▶</span></div>
<div class="b" style="left:144px;top:848px;width:48px;height:24px;background:#a2a2a2;color:#000;text-align:center;"><span style="">33</span></div>
<div class="b" style="left:144px;top:872px;width:48px;height:24px;background:#a2a2a2;color:#000;text-align:center;"><span style="">33</span></div>
<div class="b" style="left:144px;top:896px;width:48px;height:24px;background:#a2a2a2;color:#000;text-align:center;"><span style="">33</span></div>
<div class="pv" style="left:192px;top:848px;width:96px;height:72px;background:#212121;color:#fff;font-weight:bold;box-shadow:none;border-left:2px solid #a2a2a2;border-top:2px solid #a2a2a2;border-bottom:1px solid #a2a2a2;padding-top:0;line-height:23px;"><span>rubber</span></div>
<div class="b" style="left:252px;top:902px;width:18px;height:18px;background:#a2a2a2;color:#000;text-align:center;font-size:11px;line-height:18px;"><span style="">◀</span></div>
<div class="b" style="left:270px;top:902px;width:18px;height:18px;background:#a2a2a2;color:#000;text-align:center;font-size:11px;line-height:18px;"><span style="">▶</span></div>
<div class="b" style="left:0px;top:920px;width:192px;height:24px;background:#cfcfcf;color:#000;text-align:center;"><span style="">M1_main</span></div>
<div class="b" style="left:192px;top:920px;width:96px;height:24px;background:#cfcfcf;color:#000;text-align:center;"><span style="">2542 tri</span></div>
<div class="sl" style="left:0;top:944px;width:96px;height:18px;background:#f88c78"><i style="left:48px"></i></div>
<div class="b" style="left:96px;top:944px;width:24px;height:18px;background:#a2a2a2;color:#000;text-align:center;font-size:12px;line-height:18px;"><span style="">◀</span></div>
<div class="b" style="left:120px;top:944px;width:24px;height:18px;background:#a2a2a2;color:#000;text-align:center;font-size:12px;line-height:18px;"><span style="">▶</span></div>
<div class="sl" style="left:0;top:962px;width:96px;height:18px;background:#a0ffa0"><i style="left:40px"></i></div>
<div class="b" style="left:96px;top:962px;width:24px;height:18px;background:#a2a2a2;color:#000;text-align:center;font-size:12px;line-height:18px;"><span style="">◀</span></div>
<div class="b" style="left:120px;top:962px;width:24px;height:18px;background:#a2a2a2;color:#000;text-align:center;font-size:12px;line-height:18px;"><span style="">▶</span></div>
<div class="sl" style="left:0;top:980px;width:96px;height:18px;background:#a0a0ff"><i style="left:36px"></i></div>
<div class="b" style="left:96px;top:980px;width:24px;height:18px;background:#a2a2a2;color:#000;text-align:center;font-size:12px;line-height:18px;"><span style="">◀</span></div>
<div class="b" style="left:120px;top:980px;width:24px;height:18px;background:#a2a2a2;color:#000;text-align:center;font-size:12px;line-height:18px;"><span style="">▶</span></div>
<div class="sl" style="left:0;top:998px;width:96px;height:18px;background:#a0a0a0"><i style="left:46px"></i></div>
<div class="b" style="left:96px;top:998px;width:24px;height:18px;background:#a2a2a2;color:#000;text-align:center;font-size:12px;line-height:18px;"><span style="">◀</span></div>
<div class="b" style="left:120px;top:998px;width:24px;height:18px;background:#a2a2a2;color:#000;text-align:center;font-size:12px;line-height:18px;"><span style="">▶</span></div>
<div class="b" style="left:144px;top:944px;width:48px;height:24px;background:#a2a2a2;color:#000;text-align:center;"><span style="">128</span></div>
<div class="b" style="left:144px;top:968px;width:48px;height:24px;background:#a2a2a2;color:#000;text-align:center;"><span style="">105</span></div>
<div class="b" style="left:144px;top:992px;width:48px;height:24px;background:#a2a2a2;color:#000;text-align:center;"><span style="">98</span></div>
<div class="pv" style="left:192px;top:944px;width:96px;height:72px;background:#8a6b62;color:#000;font-weight:normal;box-shadow:inset 0 0 0 2px #e03030;"><span>M1_main</span></div>
<div class="b" style="left:252px;top:998px;width:18px;height:18px;background:#a2a2a2;color:#000;text-align:center;font-size:11px;line-height:18px;"><span style="">◀</span></div>
<div class="b" style="left:270px;top:998px;width:18px;height:18px;background:#a2a2a2;color:#000;text-align:center;font-size:11px;line-height:18px;"><span style="">▶</span></div>
<div class="b" style="left:288px;top:632px;width:24px;height:76px;background:#a2a2a2"></div>
<div class="b" style="left:288px;top:708px;width:24px;height:308px;background:#a0a0ff"></div>
<div class="b l" style="left:0px;top:1016px;width:96px;height:24px;background:#cfcfcf;color:#000;text-align:left;padding-left:8px;"><span style="">mapping</span></div>
<div class="b l" style="left:96px;top:1016px;width:192px;height:24px;background:#a0a0ff;color:#000;text-align:left;padding-left:8px;"><span style="">M1_main</span></div>
<div class="b" style="left:288px;top:1016px;width:96px;height:24px;background:#a0ffff;color:#000;text-align:center;"><span style="">view</span></div>
<div class="b l" style="left:0px;top:1040px;width:96px;height:24px;background:#cfcfcf;color:#000;text-align:left;padding-left:8px;"><span style="">cutout</span></div>
<div class="b l" style="left:96px;top:1040px;width:192px;height:24px;background:#a0a0ff;color:#000;text-align:left;padding-left:8px;"><span style="">body</span></div>
<div class="b" style="left:288px;top:1040px;width:96px;height:24px;background:#a0ffff;color:#000;text-align:center;"><span style="">view</span></div>
<div class="b l" style="left:0px;top:1064px;width:96px;height:24px;background:#cfcfcf;color:#000;text-align:left;padding-left:8px;"><span style="">page</span></div>
<div class="b l" style="left:96px;top:1064px;width:240px;height:24px;background:#a0a0ff;color:#000;text-align:left;padding-left:8px;"><span style="">[no texture]</span></div>
<div class="b" style="left:336px;top:1064px;width:48px;height:24px;background:#a0ffff;color:#000;text-align:center;"><span style="">▶</span></div>
<div class="b l" style="left:0px;top:1088px;width:48px;height:24px;background:#a2a2a2;color:#000;text-align:left;padding-left:8px;"><span style="">mat</span></div>
<div class="b l u" style="left:48px;top:1088px;width:96px;height:24px;background:#a0a0ff;color:#000;text-align:left;padding-left:8px;"><span style="">SOLID</span></div>
<div class="b l u" style="left:144px;top:1088px;width:96px;height:24px;background:#a0a0ff;color:#000;text-align:left;padding-left:8px;"><span style="">C SHINE</span></div>
<div class="b" style="left:240px;top:1088px;width:48px;height:24px;background:#cfcfcf;color:#000;text-align:center;"><span style="">0</span></div>
<div class="b l u" style="left:288px;top:1088px;width:96px;height:24px;background:#ffffff;color:#000;text-align:left;padding-left:8px;"><span style="">PAINT</span></div>
<div class="b" style="left:0px;top:1112px;width:240px;height:24px;background:#cfcfcf;color:#000;text-align:center;"><span style="transform:scaleX(.82)">FC3S RX7 BN sports<b style="color:#e01010">*</b></span></div>
<div class="b u" style="left:240px;top:1112px;width:72px;height:24px;background:#00e600;color:#000;text-align:center;"><span style="">LOAD</span></div>
<div class="b u" style="left:312px;top:1112px;width:72px;height:24px;background:#00e600;color:#000;text-align:center;"><span style="">SAVE</span></div>
<div class="b" style="left:0px;top:1136px;width:72px;height:24px;background:#cfcfcf;color:#000;text-align:center;"><span style="">skin</span></div>
<div class="b" style="left:72px;top:1136px;width:240px;height:24px;background:#cfcfcf;color:#000;text-align:center;"><span style=""></span></div>
<div class="b u" style="left:312px;top:1136px;width:72px;height:24px;background:#ffffa0;color:#000;text-align:center;"><span style="">OBJ</span></div>
<div class="b" style="left:1728px;top:968px;width:96px;height:24px;background:#cfcfcf;color:#000;text-align:center;"><span style="">invert</span></div>
<div class="b" style="left:1824px;top:968px;width:96px;height:24px;background:#cfcfcf;color:#000;text-align:center;"><span style="">shadow</span></div>
<div class="b" style="left:1728px;top:992px;width:96px;height:24px;background:#a0ffa0;color:#000;text-align:center;"><span style="">load scm</span></div>
<div class="b" style="left:1824px;top:992px;width:96px;height:24px;background:#a0ffa0;color:#000;text-align:center;"><span style="">save scm</span></div>
<div class="b l" style="left:1536px;top:1016px;width:96px;height:24px;background:#a0a0ff;color:#000;text-align:left;padding-left:8px;"><span style="">layers</span></div>
<div class="b l" style="left:1632px;top:1016px;width:96px;height:24px;background:#a0a0ff;color:#000;text-align:left;padding-left:8px;"><span style="">gouraud</span></div>
<div class="b p u" style="left:1728px;top:1016px;width:24px;height:24px;background:#00c000;color:#000;text-align:center;"><span style="">P</span></div>
<div class="b" style="left:1752px;top:1016px;width:24px;height:24px;background:#00e600;color:#000;text-align:center;"><span style="">f</span></div>
<div class="b" style="left:1776px;top:1016px;width:24px;height:24px;background:#00e600;color:#000;text-align:center;"><span style="">b</span></div>
<div class="b" style="left:1800px;top:1016px;width:24px;height:24px;background:#00e600;color:#000;text-align:center;"><span style="">r</span></div>
<div class="b" style="left:1824px;top:1016px;width:24px;height:24px;background:#00e600;color:#000;text-align:center;"><span style="">l</span></div>
<div class="b" style="left:1848px;top:1016px;width:24px;height:24px;background:#00e600;color:#000;text-align:center;"><span style="">t</span></div>
<div class="b" style="left:1872px;top:1016px;width:24px;height:24px;background:#00e600;color:#000;text-align:center;"><span style="">u</span></div>
<div class="b" style="left:1896px;top:1016px;width:24px;height:24px;background:#ffffa0;color:#000;text-align:center;"><span style="">•</span></div>
<div class="b l" style="left:1344px;top:1040px;width:144px;height:24px;background:#ffcc9c;color:#000;text-align:left;padding-left:8px;"><span style="">show main</span></div>
<div class="b u" style="left:1488px;top:1040px;width:48px;height:24px;background:#bdbdbd;color:#000;text-align:center;"><span style="">YES</span></div>
<div class="b l" style="left:1536px;top:1040px;width:96px;height:24px;background:#a0a0ff;color:#000;text-align:left;padding-left:8px;"><span style="">wire</span></div>
<div class="b l" style="left:1632px;top:1040px;width:96px;height:24px;background:#a0a0ff;color:#000;text-align:left;padding-left:8px;"><span style="">flat</span></div>
<div class="b" style="left:1728px;top:1040px;width:96px;height:24px;background:#a2a2a2;color:#000;text-align:center;"><span style="">–</span></div>
<div class="b" style="left:1824px;top:1040px;width:96px;height:24px;background:#a2a2a2;color:#000;text-align:center;"><span style="">–</span></div>
<div class="b l" style="left:1344px;top:1064px;width:144px;height:24px;background:#ffcc9c;color:#000;text-align:left;padding-left:8px;"><span style="">show subobs</span></div>
<div class="b u" style="left:1488px;top:1064px;width:48px;height:24px;background:#cfcfcf;color:#000;text-align:center;"><span style="">NO</span></div>
<div class="b l" style="left:1536px;top:1064px;width:96px;height:24px;background:#a0a0ff;color:#000;text-align:left;padding-left:8px;"><span style="">mappings</span></div>
<div class="b l p" style="left:1632px;top:1064px;width:96px;height:24px;background:#8c8ce4;color:#000;text-align:left;padding-left:8px;"><span style="">groups</span></div>
<div class="b" style="left:1728px;top:1064px;width:48px;height:24px;background:#a0a0ff;color:#000;text-align:center;"><span style="">0.1m</span></div>
<div class="b p" style="left:1776px;top:1064px;width:48px;height:24px;background:#8c8ce4;color:#000;text-align:center;"><span style="">1m</span></div>
<div class="b" style="left:1824px;top:1064px;width:48px;height:24px;background:#a0a0ff;color:#000;text-align:center;"><span style="">10m</span></div>
<div class="b" style="left:1872px;top:1064px;width:48px;height:24px;background:#a0a0ff;color:#000;text-align:center;"><span style="">–</span></div>
<div class="b l" style="left:1344px;top:1088px;width:144px;height:24px;background:#ffcc9c;color:#000;text-align:left;padding-left:8px;"><span style="">show wheels</span></div>
<div class="b u" style="left:1488px;top:1088px;width:48px;height:24px;background:#cfcfcf;color:#000;text-align:center;"><span style="">NO</span></div>
<div class="b l" style="left:1536px;top:1088px;width:96px;height:24px;background:#a0a0ff;color:#000;text-align:left;padding-left:8px;"><span style="">n.c.level</span></div>
<div class="b l" style="left:1632px;top:1088px;width:96px;height:24px;background:#a0a0ff;color:#000;text-align:left;padding-left:8px;"><span style="">l.r.swap</span></div>
<div class="b" style="left:1728px;top:1088px;width:96px;height:24px;background:#a0ffff;color:#000;text-align:center;"><span style="">origin</span></div>
<div class="b" style="left:1824px;top:1088px;width:96px;height:24px;background:#a0ffff;color:#000;text-align:center;"><span style="">object</span></div>
<div class="b l" style="left:1344px;top:1112px;width:144px;height:24px;background:#ffffa0;color:#000;text-align:left;padding-left:8px;"><span style="">show hidden</span></div>
<div class="b u" style="left:1488px;top:1112px;width:48px;height:24px;background:#cfcfcf;color:#000;text-align:center;"><span style="">NO</span></div>
<div class="b l" style="left:1536px;top:1112px;width:144px;height:24px;background:#ffffa0;color:#000;text-align:left;padding-left:8px;"><span style="">test l.r.swap</span></div>
<div class="b u" style="left:1680px;top:1112px;width:48px;height:24px;background:#cfcfcf;color:#000;text-align:center;"><span style="">NO</span></div>
<div class="b" style="left:1728px;top:1112px;width:48px;height:24px;background:#ffff00;color:#000;text-align:center;"><span style="">blob</span></div>
<div class="b" style="left:1776px;top:1112px;width:24px;height:24px;background:#ffff00;color:#000;text-align:center;"><span style="">–</span></div>
<div class="b" style="left:1800px;top:1112px;width:24px;height:24px;background:#ffff00;color:#000;text-align:center;"><span style="">+</span></div>
<div class="b" style="left:1824px;top:1112px;width:48px;height:24px;background:#ffff00;color:#000;text-align:center;"><span style="">text</span></div>
<div class="b" style="left:1872px;top:1112px;width:24px;height:24px;background:#ffff00;color:#000;text-align:center;"><span style="">–</span></div>
<div class="b" style="left:1896px;top:1112px;width:24px;height:24px;background:#ffff00;color:#000;text-align:center;"><span style="">+</span></div>
<div class="b" style="left:1344px;top:1136px;width:48px;height:24px;background:#a0a0ff;color:#000;text-align:center;"><span style="">nrm</span></div>
<div class="b" style="left:1392px;top:1136px;width:48px;height:24px;background:#cfcfcf;color:#000;text-align:center;"><span style="">off</span></div>
<div class="b" style="left:1440px;top:1136px;width:48px;height:24px;background:#cfcfcf;color:#000;text-align:center;"><span style="">sml</span></div>
<div class="b" style="left:1488px;top:1136px;width:48px;height:24px;background:#cfcfcf;color:#000;text-align:center;"><span style="">big</span></div>
<div class="b l" style="left:1536px;top:1136px;width:144px;height:24px;background:#ffcc9c;color:#000;text-align:left;padding-left:8px;"><span style="">wire overlay</span></div>
<div class="b u" style="left:1680px;top:1136px;width:48px;height:24px;background:#cfcfcf;color:#000;text-align:center;"><span style="">YES</span></div>
<div class="b" style="left:1728px;top:1136px;width:168px;height:24px;background:#a0ffa0;color:#000;text-align:center;"><span style="">reload textures</span></div>
<div class="b" style="left:1896px;top:1136px;width:24px;height:24px;background:#cfcfcf;color:#000;text-align:center;"><span style="">–</span></div>
<div id="tb"><svg style="position:absolute;left:0;top:0" width="400" height="40"><g fill="#fff"><polygon points="16,13.5 23,12.5 23,19.3 16,19.3"/><polygon points="24.2,12.3 32.3,11.5 32.3,19.3 24.2,19.3"/><polygon points="16,20.5 23,20.5 23,27.3 16,26.4"/><polygon points="24.2,20.5 32.3,20.5 32.3,28.3 24.2,27.5"/></g></svg><div style="position:absolute;left:48px;top:0;width:344px;height:40px;background:#f0f0f0"></div><svg style="position:absolute;left:48px;top:0" width="344" height="40"><circle cx="20" cy="17" r="6" fill="none" stroke="#222" stroke-width="1.4"/><line x1="15.5" y1="21.5" x2="11.5" y2="27.5" stroke="#222" stroke-width="1.5"/><g><path d="M268,6 L290,30 L300,40 L318,40 L304,22 L292,10 Z" fill="#7a5a40"/><path d="M310,40 L320,26 L335,14 L344,10 L344,22 L330,32 L326,40 Z" fill="#8a6a48"/><ellipse cx="270" cy="12" rx="5" ry="4" fill="#7bc043"/><ellipse cx="282" cy="22" rx="5" ry="4" fill="#6ab03a"/><ellipse cx="337" cy="14" rx="4" ry="5" fill="#8acb4a"/><ellipse cx="340" cy="28" rx="4" ry="4" fill="#7bc043"/><path d="M282,14 C290,4 306,4 314,10 C322,14 328,22 326,30 C318,32 306,24 298,22 C290,20 284,20 282,14 Z" fill="#d8b060"/><ellipse cx="287" cy="12" rx="6" ry="5" fill="#d4aa58"/></g></svg><div style="position:absolute;left:88px;top:10px;font-size:15px;line-height:20px;color:#2a2a2a;letter-spacing:-0.2px">Type here to search</div><div style="position:absolute;left:982px;top:0;width:48px;height:40px;background:#2b2c2e"></div><svg style="position:absolute;left:0;top:0" width="1920" height="40"><g transform="translate(416,20)" fill="none" stroke="#fff" stroke-width="1.4"><rect x="-9" y="-5" width="11" height="10"/><line x1="-9" y1="-9" x2="2" y2="-9"/><line x1="-9" y1="9" x2="2" y2="9"/><rect x="5" y="-5" width="3" height="3" fill="#fff"/><line x1="6.5" y1="1" x2="6.5" y2="9"/></g><g transform="translate(467,20)"><circle r="12" fill="#1ed760"/><path d="M-7,-3 Q0,-6 7,-1 M-6,1 Q0,-2 6,3 M-5,5 Q0,2 5,6" stroke="#111" stroke-width="2" fill="none" stroke-linecap="round"/></g><g transform="translate(516,20)"><rect x="-12" y="-12" width="24" height="24" fill="#5aaa3c"/><path d="M-10,-10 L10,12 M-4,-12 L8,6 M4,-12 L10,0" stroke="#cfe8b8" stroke-width="2"/></g><g transform="translate(565,20)"><rect x="-11" y="-11" width="22" height="22" fill="#001d34" stroke="#31a8ff" stroke-width="1.5"/><text x="0" y="5" font-size="13" font-family="Liberation Sans" font-weight="bold" fill="#31a8ff" text-anchor="middle">Ps</text></g><g transform="translate(612,20)"><polygon points="-11,2 6,-6 12,-2 -5,6" fill="#555"/><polygon points="-11,2 -5,6 -5,8 -11,4" fill="#333"/></g><g transform="translate(663,20)"><circle r="12" fill="#fff"/><path d="M-7,-4 L-7,3 Q-7,7 -3.5,7 Q0,7 0,3 L0,-2 M0,3 Q0,7 3.5,7 Q7,7 7,3 L7,-4" stroke="#3aa0e0" stroke-width="2" fill="none"/></g><g transform="translate(712,20)"><path d="M-12,-10 L-4,-10 L-2,-8 L12,-8 L12,10 L-12,10 Z" fill="#f0c040"/><rect x="-12" y="-6" width="24" height="16" fill="#ffd95a"/><path d="M-6,10 L-6,3 L6,3 L6,10 L3,10 L3,6 L-3,6 L-3,10 Z" fill="#2a8ad8"/></g><g transform="translate(761,20)"><rect x="-9" y="-12" width="18" height="24" rx="1.5" fill="#7a7f86"/><rect x="-7" y="-10" width="14" height="4" fill="#4fd0f0"/><g fill="#dfe3e8"><rect x="-7" y="-4" width="3.5" height="3"/><rect x="-2" y="-4" width="3.5" height="3"/><rect x="3" y="-4" width="3.5" height="3"/><rect x="-7" y="1" width="3.5" height="3"/><rect x="-2" y="1" width="3.5" height="3"/><rect x="-7" y="6" width="3.5" height="3"/><rect x="-2" y="6" width="3.5" height="3"/></g><rect x="3" y="1" width="3.5" height="8" fill="#1a4aa0"/></g><g transform="translate(809,20)"><polygon points="-9,-10 8,-11 11,10 -5,12" fill="#e8f0f4"/><polygon points="-9,-10 8,-11 9,-2 -7,4" fill="#7cc0d8"/><polygon points="8,-11 11,10 12,8 10,-10" fill="#c8a060"/></g><g transform="translate(858,20)"><path d="M0,0 L-10.39,-6 A12,12 0 0 1 10.39,-6 Z" fill="#ea4335"/><path d="M0,0 L10.39,-6 A12,12 0 0 1 0,12 Z" fill="#fbbc05"/><path d="M0,0 L0,12 A12,12 0 0 1 -10.39,-6 Z" fill="#34a853"/><circle r="5.5" fill="#fff"/><circle r="4.3" fill="#4285f4"/></g><g transform="translate(908,20)"><circle r="12" fill="#5865f2"/><path d="M-6,-3 Q0,-6 6,-3 L7,4 Q0,7 -7,4 Z" fill="#fff"/><circle cx="6" cy="6" r="6" fill="#ed4245"/><circle cx="6" cy="6" r="2.5" fill="#fff"/></g><g transform="translate(956,20)"><ellipse rx="11" ry="9" cy="2" fill="#cfe4f0"/><circle cx="-5" cy="0" r="2" fill="#e04040"/><circle cx="-2" cy="-4" r="2" fill="#40b040"/><circle cx="3" cy="-4" r="2" fill="#f0c030"/><circle cx="-3" cy="5" r="2" fill="#333"/><line x1="2" y1="11" x2="12" y2="-11" stroke="#e0a050" stroke-width="2.5"/></g><g transform="translate(1006,20)"><rect x="-12" y="-12" width="24" height="24" rx="4" fill="#1a2a7a"/><rect x="-10" y="-10" width="20" height="8" rx="3" fill="#4a5aa0"/><path d="M-6,6 L-2,-6 M-2,6 L2,-6 M2,2 L8,2" stroke="#7fd0ff" stroke-width="2"/><path d="M1,-4 L8,-4 L5,6 L-1,6" stroke="#f0d040" stroke-width="2" fill="none"/></g><g transform="translate(1055,20)"><rect x="-12" y="-12" width="24" height="24" rx="2" fill="#2d9be0"/><path d="M-12,12 L-12,4 L-2,-4 L12,8 L12,12 Z" fill="#7fd3ff"/><circle cx="6" cy="-5" r="3" fill="#fff"/></g><rect x="545" y="38" width="39" height="2" fill="#9aa4ae"/><rect x="692" y="38" width="35" height="2" fill="#9aa4ae"/><rect x="741" y="38" width="40" height="2" fill="#9aa4ae"/><rect x="839" y="38" width="40" height="2" fill="#9aa4ae"/><rect x="888" y="38" width="40" height="2" fill="#9aa4ae"/><rect x="937" y="38" width="40" height="2" fill="#9aa4ae"/><rect x="982" y="38" width="48" height="2" fill="#9aa4ae"/><rect x="1034" y="38" width="41" height="2" fill="#9aa4ae"/><g transform="translate(1642,20)"><path d="M-11,5 Q-13,-1 -7,-2 Q-6,-8 0,-8 Q6,-8 7,-2 Q13,-1 11,5 Z" fill="#a8c8f0"/></g><path d="M1680,23 L1686,17 L1692,23" stroke="#fff" stroke-width="1.3" fill="none"/><g transform="translate(1710,20)" stroke="#fff" stroke-width="1.2" fill="none"><path d="M-8,-3 L-5,-3 L-1,-7 L-1,7 L-5,3 L-8,3 Z"/><path d="M2,-3 Q4,0 2,3 M4.5,-5 Q7.5,0 4.5,5 M7,-7 Q11,0 7,7"/></g><g transform="translate(1737,20)" fill="none" stroke="#fff" stroke-width="1.2"><rect x="-11" y="-6" width="22" height="12"/><path d="M-8,-3 H8 M-8,0 H8 M-5,3 H5" stroke-dasharray="1.5 1"/></g><g transform="translate(1887,20)" fill="none" stroke="#fff" stroke-width="1.3"><path d="M-8,-8 H8 V6 H2 L0,9 L-2,6 H-8 Z"/></g><rect x="1915" y="0" width="1" height="40" fill="#555"/></svg><div style="position:absolute;left:1751px;top:12px;width:40px;text-align:center;font-size:12px;line-height:16px;color:#fff">ENG</div><div style="position:absolute;left:1778px;top:3px;width:100px;text-align:center;font-size:12px;line-height:16px;color:#fff">03:11<br>04.03.2024 г.</div></div>
</body></html>
